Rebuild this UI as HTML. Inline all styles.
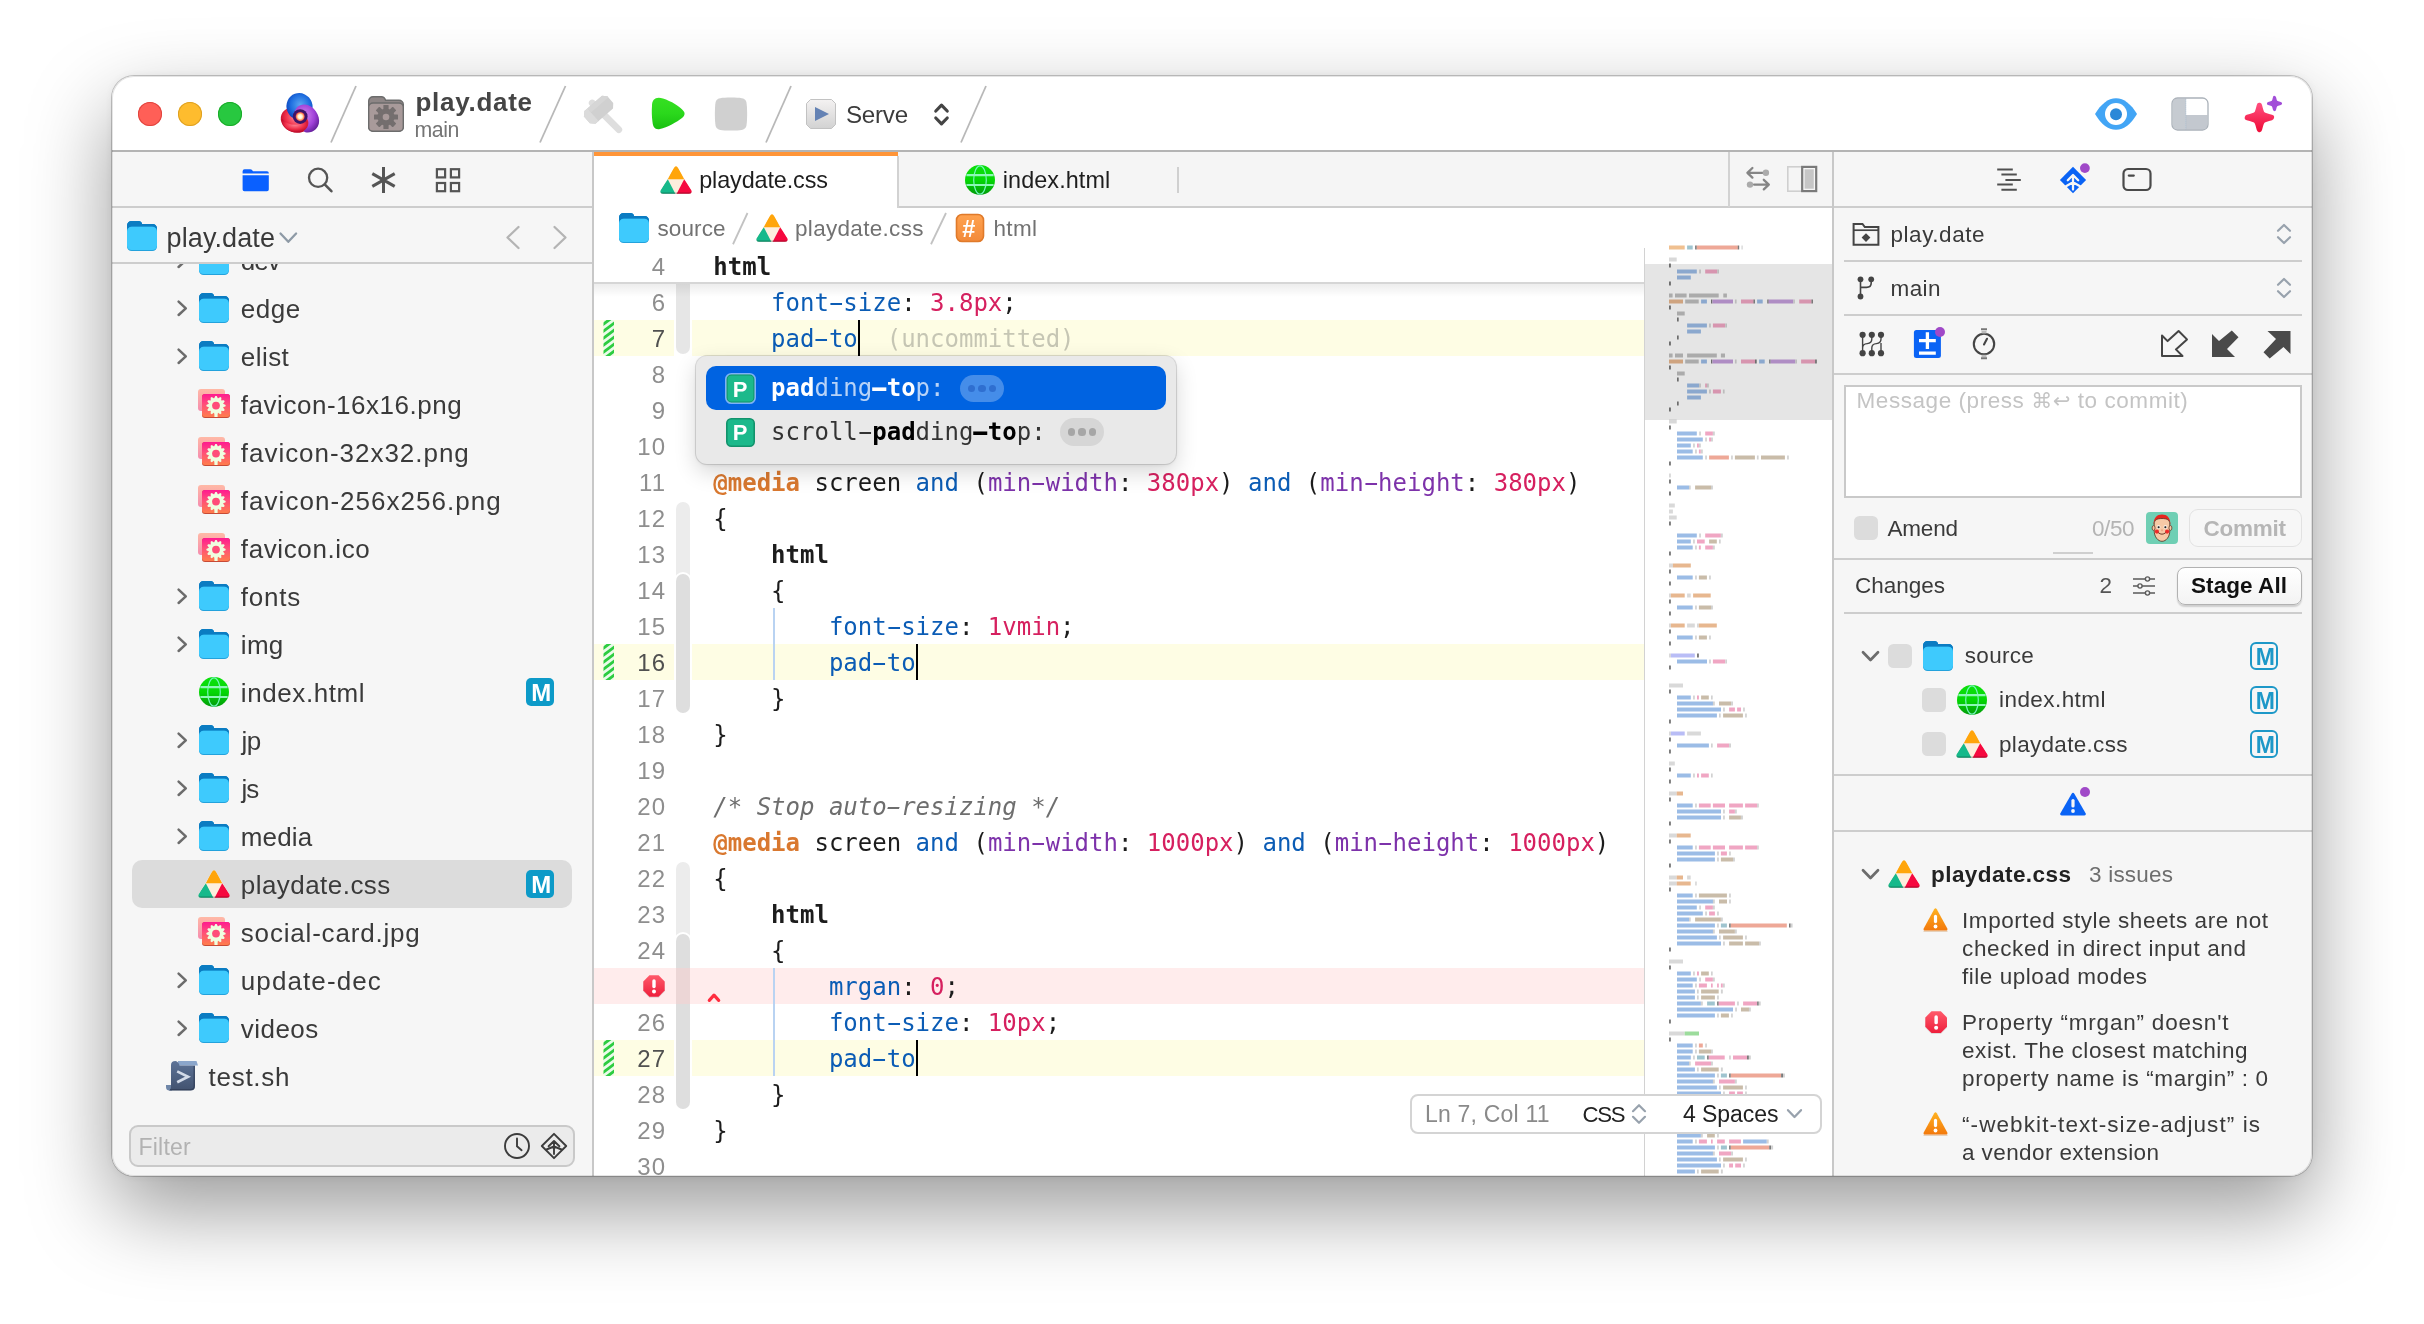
<!DOCTYPE html><html lang="en"><head><meta charset="utf-8"><title>playdate.css — play.date</title><style>
html,body{margin:0;padding:0;background:#fff;}
body{width:2424px;height:1324px;position:relative;overflow:hidden;font-family:"Liberation Sans",sans-serif;}
div,svg{position:absolute;}
svg{overflow:visible;display:block;}
.t{white-space:pre;font-kerning:normal;font-weight:400;}
.hy{display:inline-block;transform:scaleX(1.9);}
.s{font-family:"Liberation Sans","DejaVu Sans",sans-serif;}
.dj{font-family:"DejaVu Sans",sans-serif;font-size:21px;}
.m{font-family:"DejaVu Sans Mono","Liberation Mono",monospace;}
#win{border-radius:22px;background:#f6f6f6;box-shadow:0 0 0 1px rgba(0,0,0,.20),0 34px 84px 0 rgba(0,0,0,.40),0 0 8px rgba(0,0,0,.06);}
#clip{border-radius:22px;overflow:hidden;}
#page{will-change:transform;}
#ring{border-radius:22px;box-shadow:inset 0 0 0 1px rgba(0,0,0,.10);pointer-events:none;}
</style></head><body><div id="win" style="left:112px;top:76px;width:2200px;height:1100px;"></div><div id="clip" style="left:112px;top:76px;width:2200px;height:1100px;"><div id="page" style="left:-112px;top:-76px;width:2424px;height:1324px;"><div style="left:112px;top:76px;width:2200px;height:75px;background:#fff;"></div><div style="left:112px;top:150px;width:2200px;height:2px;background:#b4b4b4;"></div><div style="left:138px;top:102px;width:24px;height:24px;border-radius:50%;background:#ff5f57;box-shadow:inset 0 0 0 1px #e0443e;"></div><div style="left:178px;top:102px;width:24px;height:24px;border-radius:50%;background:#febc2e;box-shadow:inset 0 0 0 1px #dea123;"></div><div style="left:218px;top:102px;width:24px;height:24px;border-radius:50%;background:#28c840;box-shadow:inset 0 0 0 1px #1aab29;"></div><svg style="left:280px;top:93px;" width="40" height="40" viewBox="0 0 40 40"><defs><radialGradient id="g1" cx=".55" cy=".45" r=".6"><stop offset="0" stop-color="#5aa6f2"/><stop offset=".6" stop-color="#1f6fe0"/><stop offset="1" stop-color="#0a3fb8"/></radialGradient><radialGradient id="g2" cx=".5" cy=".4" r=".65"><stop offset="0" stop-color="#ff8a9a"/><stop offset=".55" stop-color="#f0304a"/><stop offset="1" stop-color="#b00020"/></radialGradient><radialGradient id="g3" cx=".4" cy=".4" r=".7"><stop offset="0" stop-color="#d58af0"/><stop offset=".6" stop-color="#a040d8"/><stop offset="1" stop-color="#5a1a90"/></radialGradient><radialGradient id="g4"><stop offset="0" stop-color="#fff"/><stop offset=".45" stop-color="#fff1d0"/><stop offset=".8" stop-color="#ff8a50"/><stop offset="1" stop-color="#c03060"/></radialGradient></defs><ellipse cx="15.5" cy="27" rx="15" ry="12.5" transform="rotate(20 15.5 27)" fill="url(#g2)"/><ellipse cx="19.5" cy="13.5" rx="13" ry="13.5" transform="rotate(-20 19.5 13.5)" fill="url(#g1)"/><path d="M14 23C14 12 24 9 31 13.5C39 19 42 30 36 36C32 40 26 40.5 23.5 38C30 34 30 26 24 22C20 20 16 21 14 23Z" fill="url(#g3)"/><path d="M2 26C8 33 20 34 27 27C29 31 27 36 22 38.5C14 41 3 38 2 26Z" fill="url(#g2)"/><circle cx="20.2" cy="23.6" r="7.4" fill="#3c1468"/><circle cx="20.2" cy="23.6" r="4.6" fill="url(#g4)"/></svg><svg style="left:329px;top:83.5px;" width="29" height="60.5" viewBox="0 0 29 60.5"><path d="M27 2L2 58.5" stroke="#b8b8b8" stroke-width="1.8" fill="none"/></svg><svg style="left:368px;top:96px;" width="36" height="36" viewBox="0 0 36 36"><path d="M.7 5A4.3 4.3 0 0 1 5 .7H13.5C16 .7 16.8 2 17.6 4.3H31A4.3 4.3 0 0 1 35.3 8.6V31A4.3 4.3 0 0 1 31 35.3H5A4.3 4.3 0 0 1 .7 31Z" fill="#8e8686" stroke="#6c6c6c" stroke-width="1.4"/><rect x=".7" y="7" width="34.6" height="28.3" rx="4.3" fill="#a89a9a" stroke="#6c6c6c" stroke-width="1.4"/><g transform="translate(18 21)" fill="#746e6e"><rect x="-2.6" y="-12" width="5.2" height="6" rx=".6" transform="rotate(0)"/><rect x="-2.6" y="-12" width="5.2" height="6" rx=".6" transform="rotate(45)"/><rect x="-2.6" y="-12" width="5.2" height="6" rx=".6" transform="rotate(90)"/><rect x="-2.6" y="-12" width="5.2" height="6" rx=".6" transform="rotate(135)"/><rect x="-2.6" y="-12" width="5.2" height="6" rx=".6" transform="rotate(180)"/><rect x="-2.6" y="-12" width="5.2" height="6" rx=".6" transform="rotate(225)"/><rect x="-2.6" y="-12" width="5.2" height="6" rx=".6" transform="rotate(270)"/><rect x="-2.6" y="-12" width="5.2" height="6" rx=".6" transform="rotate(315)"/><circle r="8.6"/></g><circle cx="18" cy="21" r="3.3" fill="#a89a9a"/></svg><div class="t s" style="left:415.5px;top:87px;font-weight:700;font-size:26px;line-height:30px;color:#454545;letter-spacing:0.714px;">play.date</div><div class="t s" style="left:414.5px;top:117.6px;font-size:21.3px;line-height:24px;color:#757575;letter-spacing:-0.459px;">main</div><svg style="left:538px;top:83.5px;" width="29.5" height="60.5" viewBox="0 0 29.5 60.5"><path d="M27.5 2L2 58.5" stroke="#b8b8b8" stroke-width="1.8" fill="none"/></svg><svg style="left:583px;top:94px;" width="41" height="41" viewBox="0 0 41 41"><path d="M9.2 9L35.8 35.6" stroke="#dedede" stroke-width="6.8" stroke-linecap="round" fill="none"/><g transform="translate(15.6 15.8) rotate(-41)"><path d="M-15.5 -4.5L-11.5 -8.4H11.8L15.5 -4.5V4.5L11.8 8.4H-11.5L-15.5 4.5Z" fill="#d0d0d0"/><path d="M-15.5 -4.5L-11.5 -8.4H-7.5V8.4H-11.5L-15.5 4.5Z" fill="#dbdbdb"/><path d="M-7.5 -8.4H11.8L15.5 -4.5V-3H-7.5Z" fill="#d6d6d6"/></g></svg><svg style="left:651px;top:97px;" width="34" height="34" viewBox="0 0 34 34"><defs><linearGradient id="g5" x1="0" y1="0" x2="0" y2="1"><stop offset="0" stop-color="#36e022"/><stop offset=".5" stop-color="#2bd81c"/><stop offset="1" stop-color="#18c010"/></linearGradient></defs><path d="M1 9C1 2 5 -.5 12 1.5C20 4 29 9.5 32.5 14C34.5 16.5 33.5 19 31 21C26 25 16 30.5 9 32C4 33 2 30 1.5 25C.8 19 .6 14 1 9Z" fill="url(#g5)"/></svg><svg style="left:714px;top:97px;" width="34" height="34" viewBox="0 0 34 34"><path d="M17 .5C27 .5 30.5 1 32 4C33.5 7 33.5 27 32 30C30.5 33 27 33.5 17 33.5C7 33.5 3.5 33 2 30C.5 27 .5 7 2 4C3.5 1 7 .5 17 .5Z" fill="#d0d0d0"/></svg><svg style="left:764px;top:83.5px;" width="29" height="60.5" viewBox="0 0 29 60.5"><path d="M27 2L2 58.5" stroke="#b8b8b8" stroke-width="1.8" fill="none"/></svg><svg style="left:806px;top:99px;" width="30" height="30" viewBox="0 0 30 30"><defs><linearGradient id="g6" x1="0" y1="0" x2="0" y2="1"><stop offset="0" stop-color="#f4f2f2"/><stop offset="1" stop-color="#d2d2d2"/></linearGradient></defs><path d="M4.5 .5H25.5L29.5 4.5V25.5L25.5 29.5H4.5L.5 25.5V4.5Z" fill="url(#g6)" stroke="#c2c2c2" stroke-width="1"/><path d="M9 8L23 15L9 22Z" fill="#6482b4"/></svg><div class="t s" style="left:845.9px;top:100.7px;font-size:24.2px;line-height:27px;color:#3c3c3c;letter-spacing:-0.228px;">Serve</div><svg style="left:934px;top:103px;" width="15" height="23" viewBox="0 0 15 23"><path d="M1.8 8L7.5 2.2L13.2 8M1.8 15L7.5 20.8L13.2 15" fill="none" stroke="#444" stroke-width="3.2" stroke-linecap="round" stroke-linejoin="round"/></svg><svg style="left:958.5px;top:83.5px;" width="29" height="60.5" viewBox="0 0 29 60.5"><path d="M27 2L2 58.5" stroke="#b8b8b8" stroke-width="1.8" fill="none"/></svg><svg style="left:2094px;top:97px;" width="44" height="34" viewBox="0 0 44 34"><path d="M1 17C7 7 14 1.2 22 1.2S37 7 43 17C37 27 30 32.8 22 32.8S7 27 1 17Z" fill="#42a5f5"/><circle cx="22" cy="17" r="11" fill="#fff"/><circle cx="22" cy="17.2" r="6" fill="#2b88d8"/></svg><svg style="left:2171px;top:97px;" width="38" height="34" viewBox="0 0 38 34"><rect x="1" y="1" width="36" height="32" rx="5.5" fill="#fff"/><path d="M6.5 1.6H14.8V32.4H6.5A4.9 4.9 0 0 1 1.6 27.5V6.5A4.9 4.9 0 0 1 6.5 1.6Z" fill="#c6cbd1"/><path d="M14.8 18H36.4V27.5A4.9 4.9 0 0 1 31.5 32.4H14.8Z" fill="#c3c8cf"/><path d="M14.8 1.6V32.4" stroke="#9fb4c8" stroke-width="1" stroke-dasharray="1 1"/><rect x="1" y="1" width="36" height="32" rx="5.5" fill="none" stroke="#aab1b9" stroke-width="1.3"/></svg><svg style="left:2243px;top:94px;" width="42" height="40" viewBox="0 0 42 40"><defs><linearGradient id="g7" x1="0" y1="0" x2="0" y2="1"><stop offset="0" stop-color="#ff4a7a"/><stop offset="1" stop-color="#f0103c"/></linearGradient></defs><path d="M16.4 11.5C18.7 21.2 18.7 21.2 28.4 23.5C18.7 25.8 18.7 25.8 16.4 35.5C14.099999999999998 25.8 14.099999999999998 25.8 4.399999999999999 23.5C14.099999999999998 21.2 14.099999999999998 21.2 16.4 11.5Z" fill="url(#g7)" stroke="url(#g7)" stroke-width="5.4" stroke-linejoin="round"/><path d="M31.5 3.5C32.6 8.4 32.6 8.4 37.5 9.5C32.6 10.6 32.6 10.6 31.5 15.5C30.4 10.6 30.4 10.6 25.5 9.5C30.4 8.4 30.4 8.4 31.5 3.5Z" fill="#a24ed8" stroke="#a24ed8" stroke-width="3.2" stroke-linejoin="round"/></svg><div style="left:112px;top:152px;width:480px;height:1024px;background:#f6f6f6;"></div><div style="left:592px;top:152px;width:2px;height:1024px;background:#c8c8c8;"></div><svg style="left:242px;top:168px;" width="28" height="24" viewBox="0 0 28 24"><path d="M.6 3.2A2 2 0 0 1 2.6 1.2H8.2C9.6 1.2 10.2 2 11 3.2H25A1.8 1.8 0 0 1 26.8 5V5.6H.6ZM.6 7.2H26.8V21.4A1.8 1.8 0 0 1 25 23.2H2.4A1.8 1.8 0 0 1 .6 21.4Z" fill="#0a60ff"/></svg><svg style="left:305px;top:165px;" width="30" height="30" viewBox="0 0 30 30"><circle cx="13.1" cy="12.8" r="9.1" fill="none" stroke="#555" stroke-width="2.3"/><path d="M19.7 19.4L26.4 26.2" stroke="#555" stroke-width="2.6" stroke-linecap="round"/></svg><svg style="left:369px;top:165px;" width="30" height="30" viewBox="0 0 30 30"><path d="M14.5 2.1V27.9M3.3 8.6L25.7 21.4M25.7 8.6L3.3 21.4" stroke="#555" stroke-width="3" fill="none"/></svg><svg style="left:434px;top:166px;" width="28" height="28" viewBox="0 0 28 28"><g fill="none" stroke="#555" stroke-width="2.2"><rect x="2.9" y="3.2" width="8.2" height="8.2"/><rect x="16.9" y="3.2" width="8.2" height="8.2"/><rect x="2.9" y="17" width="8.2" height="8.2"/><rect x="16.9" y="17" width="8.2" height="8.2"/></g></svg><div style="left:112px;top:206px;width:480px;height:2px;background:#cdcdcd;"></div><svg style="left:127px;top:221px;" width="30" height="30" viewBox="0 0 30 30"><path d="M0 4.5A4.5 4.5 0 0 1 4.5 0H11.5C13.6 0 14.4 .9 15.1 2.9H25.7A4.3 4.3 0 0 1 30 7.2V20H0Z" fill="#0a86cf"/><path d="M0 4.5A4.5 4.5 0 0 1 4.5 0H11.5C13.6 0 14.4 .9 15.1 2.9H25.7A4.3 4.3 0 0 1 30 7.2V9H0Z" fill="#0b7cc2"/><rect x="0" y="5.8" width="30" height="24.2" rx="4.6" fill="#23a2dc"/><rect x="0" y="5.8" width="30" height="23.2" rx="4.6" fill="#3ecafd"/></svg><div class="t s" style="left:166.6px;top:222.5px;font-size:27px;line-height:30px;color:#3a3a3a;letter-spacing:0.091px;">play.date</div><svg style="left:279px;top:232px;" width="19" height="12" viewBox="0 0 19 12"><path d="M1.5 1.5L9.3 9.8L17.1 1.5" fill="none" stroke="#8e9aa6" stroke-width="2.3" stroke-linecap="round" stroke-linejoin="round"/></svg><svg style="left:505px;top:225px;" width="16" height="26" viewBox="0 0 16 26"><path d="M13.5 2L2.5 12.5L13.5 23" fill="none" stroke="#b4b4b4" stroke-width="2.3" stroke-linecap="round" stroke-linejoin="round"/></svg><svg style="left:552px;top:225px;" width="16" height="26" viewBox="0 0 16 26"><path d="M2.5 2L13.5 12.5L2.5 23" fill="none" stroke="#b4b4b4" stroke-width="2.3" stroke-linecap="round" stroke-linejoin="round"/></svg><div style="left:112px;top:262px;width:480px;height:2px;background:#cdcdcd;"></div><div style="left:112px;top:264px;width:481px;height:860px;overflow:hidden;"><div style="left:-112px;top:-264px;width:2424px;height:1324px;"><svg style="left:177px;top:252px;" width="11" height="17" viewBox="0 0 11 17"><path d="M1.6 1.6L8.8 8.3L1.6 15" fill="none" stroke="#6c6c6c" stroke-width="2.5" stroke-linecap="round" stroke-linejoin="round"/></svg><svg style="left:199px;top:245px;" width="30" height="30" viewBox="0 0 30 30"><path d="M0 4.5A4.5 4.5 0 0 1 4.5 0H11.5C13.6 0 14.4 .9 15.1 2.9H25.7A4.3 4.3 0 0 1 30 7.2V20H0Z" fill="#0a86cf"/><path d="M0 4.5A4.5 4.5 0 0 1 4.5 0H11.5C13.6 0 14.4 .9 15.1 2.9H25.7A4.3 4.3 0 0 1 30 7.2V9H0Z" fill="#0b7cc2"/><rect x="0" y="5.8" width="30" height="24.2" rx="4.6" fill="#23a2dc"/><rect x="0" y="5.8" width="30" height="23.2" rx="4.6" fill="#3ecafd"/></svg><div class="t s" style="left:240.8px;top:245.7px;font-size:26px;line-height:30px;color:#3a3a3a;letter-spacing:-0.956px;">dev</div><svg style="left:177px;top:300px;" width="11" height="17" viewBox="0 0 11 17"><path d="M1.6 1.6L8.8 8.3L1.6 15" fill="none" stroke="#6c6c6c" stroke-width="2.5" stroke-linecap="round" stroke-linejoin="round"/></svg><svg style="left:199px;top:293px;" width="30" height="30" viewBox="0 0 30 30"><path d="M0 4.5A4.5 4.5 0 0 1 4.5 0H11.5C13.6 0 14.4 .9 15.1 2.9H25.7A4.3 4.3 0 0 1 30 7.2V20H0Z" fill="#0a86cf"/><path d="M0 4.5A4.5 4.5 0 0 1 4.5 0H11.5C13.6 0 14.4 .9 15.1 2.9H25.7A4.3 4.3 0 0 1 30 7.2V9H0Z" fill="#0b7cc2"/><rect x="0" y="5.8" width="30" height="24.2" rx="4.6" fill="#23a2dc"/><rect x="0" y="5.8" width="30" height="23.2" rx="4.6" fill="#3ecafd"/></svg><div class="t s" style="left:240.8px;top:293.7px;font-size:26px;line-height:30px;color:#3a3a3a;letter-spacing:0.55px;">edge</div><svg style="left:177px;top:348px;" width="11" height="17" viewBox="0 0 11 17"><path d="M1.6 1.6L8.8 8.3L1.6 15" fill="none" stroke="#6c6c6c" stroke-width="2.5" stroke-linecap="round" stroke-linejoin="round"/></svg><svg style="left:199px;top:341px;" width="30" height="30" viewBox="0 0 30 30"><path d="M0 4.5A4.5 4.5 0 0 1 4.5 0H11.5C13.6 0 14.4 .9 15.1 2.9H25.7A4.3 4.3 0 0 1 30 7.2V20H0Z" fill="#0a86cf"/><path d="M0 4.5A4.5 4.5 0 0 1 4.5 0H11.5C13.6 0 14.4 .9 15.1 2.9H25.7A4.3 4.3 0 0 1 30 7.2V9H0Z" fill="#0b7cc2"/><rect x="0" y="5.8" width="30" height="24.2" rx="4.6" fill="#23a2dc"/><rect x="0" y="5.8" width="30" height="23.2" rx="4.6" fill="#3ecafd"/></svg><div class="t s" style="left:240.8px;top:341.7px;font-size:26px;line-height:30px;color:#3a3a3a;letter-spacing:0.443px;">elist</div><svg style="left:198px;top:388.5px;" width="32" height="29" viewBox="0 0 32 29"><defs><linearGradient id="g8" x1="0" y1="0" x2="0" y2="1"><stop offset="0" stop-color="#ff1a90"/><stop offset=".45" stop-color="#ff4f79"/><stop offset="1" stop-color="#ff7d4c"/></linearGradient><linearGradient id="g9" x1="0" y1="0" x2="0" y2="1"><stop offset="0" stop-color="#ffb9a6"/><stop offset="1" stop-color="#f58cae"/></linearGradient></defs><rect x="0" y="0" width="27" height="22" rx="3" fill="url(#g9)"/><rect x="4" y="5" width="28" height="24" rx="3" fill="#c74a36"/><rect x="4" y="5" width="28" height="23" rx="3" fill="url(#g8)"/><g transform="translate(18 16.6)" fill="#efffe0"><path d="M-2.5 -5.8L-.7 -9.6H.7L2.5 -5.8Z" transform="rotate(0)"/><path d="M-2.5 -5.8L-.7 -9.6H.7L2.5 -5.8Z" transform="rotate(30)"/><path d="M-2.5 -5.8L-.7 -9.6H.7L2.5 -5.8Z" transform="rotate(60)"/><path d="M-2.5 -5.8L-.7 -9.6H.7L2.5 -5.8Z" transform="rotate(90)"/><path d="M-2.5 -5.8L-.7 -9.6H.7L2.5 -5.8Z" transform="rotate(120)"/><path d="M-2.5 -5.8L-.7 -9.6H.7L2.5 -5.8Z" transform="rotate(150)"/><path d="M-2.5 -5.8L-.7 -9.6H.7L2.5 -5.8Z" transform="rotate(180)"/><path d="M-2.5 -5.8L-.7 -9.6H.7L2.5 -5.8Z" transform="rotate(210)"/><path d="M-2.5 -5.8L-.7 -9.6H.7L2.5 -5.8Z" transform="rotate(240)"/><path d="M-2.5 -5.8L-.7 -9.6H.7L2.5 -5.8Z" transform="rotate(270)"/><path d="M-2.5 -5.8L-.7 -9.6H.7L2.5 -5.8Z" transform="rotate(300)"/><path d="M-2.5 -5.8L-.7 -9.6H.7L2.5 -5.8Z" transform="rotate(330)"/><circle r="6.5"/><rect x="-1.6" y="5" width="3.2" height="6.4"/></g><circle cx="18" cy="16.6" r="3.9" fill="#ff4d78"/></svg><div class="t s" style="left:240.8px;top:389.7px;font-size:26px;line-height:30px;color:#3a3a3a;letter-spacing:0.533px;">favicon-16x16.png</div><svg style="left:198px;top:436.5px;" width="32" height="29" viewBox="0 0 32 29"><defs><linearGradient id="g10" x1="0" y1="0" x2="0" y2="1"><stop offset="0" stop-color="#ff1a90"/><stop offset=".45" stop-color="#ff4f79"/><stop offset="1" stop-color="#ff7d4c"/></linearGradient><linearGradient id="g11" x1="0" y1="0" x2="0" y2="1"><stop offset="0" stop-color="#ffb9a6"/><stop offset="1" stop-color="#f58cae"/></linearGradient></defs><rect x="0" y="0" width="27" height="22" rx="3" fill="url(#g11)"/><rect x="4" y="5" width="28" height="24" rx="3" fill="#c74a36"/><rect x="4" y="5" width="28" height="23" rx="3" fill="url(#g10)"/><g transform="translate(18 16.6)" fill="#efffe0"><path d="M-2.5 -5.8L-.7 -9.6H.7L2.5 -5.8Z" transform="rotate(0)"/><path d="M-2.5 -5.8L-.7 -9.6H.7L2.5 -5.8Z" transform="rotate(30)"/><path d="M-2.5 -5.8L-.7 -9.6H.7L2.5 -5.8Z" transform="rotate(60)"/><path d="M-2.5 -5.8L-.7 -9.6H.7L2.5 -5.8Z" transform="rotate(90)"/><path d="M-2.5 -5.8L-.7 -9.6H.7L2.5 -5.8Z" transform="rotate(120)"/><path d="M-2.5 -5.8L-.7 -9.6H.7L2.5 -5.8Z" transform="rotate(150)"/><path d="M-2.5 -5.8L-.7 -9.6H.7L2.5 -5.8Z" transform="rotate(180)"/><path d="M-2.5 -5.8L-.7 -9.6H.7L2.5 -5.8Z" transform="rotate(210)"/><path d="M-2.5 -5.8L-.7 -9.6H.7L2.5 -5.8Z" transform="rotate(240)"/><path d="M-2.5 -5.8L-.7 -9.6H.7L2.5 -5.8Z" transform="rotate(270)"/><path d="M-2.5 -5.8L-.7 -9.6H.7L2.5 -5.8Z" transform="rotate(300)"/><path d="M-2.5 -5.8L-.7 -9.6H.7L2.5 -5.8Z" transform="rotate(330)"/><circle r="6.5"/><rect x="-1.6" y="5" width="3.2" height="6.4"/></g><circle cx="18" cy="16.6" r="3.9" fill="#ff4d78"/></svg><div class="t s" style="left:240.8px;top:437.7px;font-size:26px;line-height:30px;color:#3a3a3a;letter-spacing:0.971px;">favicon-32x32.png</div><svg style="left:198px;top:484.5px;" width="32" height="29" viewBox="0 0 32 29"><defs><linearGradient id="g12" x1="0" y1="0" x2="0" y2="1"><stop offset="0" stop-color="#ff1a90"/><stop offset=".45" stop-color="#ff4f79"/><stop offset="1" stop-color="#ff7d4c"/></linearGradient><linearGradient id="g13" x1="0" y1="0" x2="0" y2="1"><stop offset="0" stop-color="#ffb9a6"/><stop offset="1" stop-color="#f58cae"/></linearGradient></defs><rect x="0" y="0" width="27" height="22" rx="3" fill="url(#g13)"/><rect x="4" y="5" width="28" height="24" rx="3" fill="#c74a36"/><rect x="4" y="5" width="28" height="23" rx="3" fill="url(#g12)"/><g transform="translate(18 16.6)" fill="#efffe0"><path d="M-2.5 -5.8L-.7 -9.6H.7L2.5 -5.8Z" transform="rotate(0)"/><path d="M-2.5 -5.8L-.7 -9.6H.7L2.5 -5.8Z" transform="rotate(30)"/><path d="M-2.5 -5.8L-.7 -9.6H.7L2.5 -5.8Z" transform="rotate(60)"/><path d="M-2.5 -5.8L-.7 -9.6H.7L2.5 -5.8Z" transform="rotate(90)"/><path d="M-2.5 -5.8L-.7 -9.6H.7L2.5 -5.8Z" transform="rotate(120)"/><path d="M-2.5 -5.8L-.7 -9.6H.7L2.5 -5.8Z" transform="rotate(150)"/><path d="M-2.5 -5.8L-.7 -9.6H.7L2.5 -5.8Z" transform="rotate(180)"/><path d="M-2.5 -5.8L-.7 -9.6H.7L2.5 -5.8Z" transform="rotate(210)"/><path d="M-2.5 -5.8L-.7 -9.6H.7L2.5 -5.8Z" transform="rotate(240)"/><path d="M-2.5 -5.8L-.7 -9.6H.7L2.5 -5.8Z" transform="rotate(270)"/><path d="M-2.5 -5.8L-.7 -9.6H.7L2.5 -5.8Z" transform="rotate(300)"/><path d="M-2.5 -5.8L-.7 -9.6H.7L2.5 -5.8Z" transform="rotate(330)"/><circle r="6.5"/><rect x="-1.6" y="5" width="3.2" height="6.4"/></g><circle cx="18" cy="16.6" r="3.9" fill="#ff4d78"/></svg><div class="t s" style="left:240.8px;top:485.7px;font-size:26px;line-height:30px;color:#3a3a3a;letter-spacing:1.033px;">favicon-256x256.png</div><svg style="left:198px;top:532.5px;" width="32" height="29" viewBox="0 0 32 29"><defs><linearGradient id="g14" x1="0" y1="0" x2="0" y2="1"><stop offset="0" stop-color="#ff1a90"/><stop offset=".45" stop-color="#ff4f79"/><stop offset="1" stop-color="#ff7d4c"/></linearGradient><linearGradient id="g15" x1="0" y1="0" x2="0" y2="1"><stop offset="0" stop-color="#ffb9a6"/><stop offset="1" stop-color="#f58cae"/></linearGradient></defs><rect x="0" y="0" width="27" height="22" rx="3" fill="url(#g15)"/><rect x="4" y="5" width="28" height="24" rx="3" fill="#c74a36"/><rect x="4" y="5" width="28" height="23" rx="3" fill="url(#g14)"/><g transform="translate(18 16.6)" fill="#efffe0"><path d="M-2.5 -5.8L-.7 -9.6H.7L2.5 -5.8Z" transform="rotate(0)"/><path d="M-2.5 -5.8L-.7 -9.6H.7L2.5 -5.8Z" transform="rotate(30)"/><path d="M-2.5 -5.8L-.7 -9.6H.7L2.5 -5.8Z" transform="rotate(60)"/><path d="M-2.5 -5.8L-.7 -9.6H.7L2.5 -5.8Z" transform="rotate(90)"/><path d="M-2.5 -5.8L-.7 -9.6H.7L2.5 -5.8Z" transform="rotate(120)"/><path d="M-2.5 -5.8L-.7 -9.6H.7L2.5 -5.8Z" transform="rotate(150)"/><path d="M-2.5 -5.8L-.7 -9.6H.7L2.5 -5.8Z" transform="rotate(180)"/><path d="M-2.5 -5.8L-.7 -9.6H.7L2.5 -5.8Z" transform="rotate(210)"/><path d="M-2.5 -5.8L-.7 -9.6H.7L2.5 -5.8Z" transform="rotate(240)"/><path d="M-2.5 -5.8L-.7 -9.6H.7L2.5 -5.8Z" transform="rotate(270)"/><path d="M-2.5 -5.8L-.7 -9.6H.7L2.5 -5.8Z" transform="rotate(300)"/><path d="M-2.5 -5.8L-.7 -9.6H.7L2.5 -5.8Z" transform="rotate(330)"/><circle r="6.5"/><rect x="-1.6" y="5" width="3.2" height="6.4"/></g><circle cx="18" cy="16.6" r="3.9" fill="#ff4d78"/></svg><div class="t s" style="left:240.8px;top:533.7px;font-size:26px;line-height:30px;color:#3a3a3a;letter-spacing:0.615px;">favicon.ico</div><svg style="left:177px;top:588px;" width="11" height="17" viewBox="0 0 11 17"><path d="M1.6 1.6L8.8 8.3L1.6 15" fill="none" stroke="#6c6c6c" stroke-width="2.5" stroke-linecap="round" stroke-linejoin="round"/></svg><svg style="left:199px;top:581px;" width="30" height="30" viewBox="0 0 30 30"><path d="M0 4.5A4.5 4.5 0 0 1 4.5 0H11.5C13.6 0 14.4 .9 15.1 2.9H25.7A4.3 4.3 0 0 1 30 7.2V20H0Z" fill="#0a86cf"/><path d="M0 4.5A4.5 4.5 0 0 1 4.5 0H11.5C13.6 0 14.4 .9 15.1 2.9H25.7A4.3 4.3 0 0 1 30 7.2V9H0Z" fill="#0b7cc2"/><rect x="0" y="5.8" width="30" height="24.2" rx="4.6" fill="#23a2dc"/><rect x="0" y="5.8" width="30" height="23.2" rx="4.6" fill="#3ecafd"/></svg><div class="t s" style="left:240.8px;top:581.7px;font-size:26px;line-height:30px;color:#3a3a3a;letter-spacing:0.783px;">fonts</div><svg style="left:177px;top:636px;" width="11" height="17" viewBox="0 0 11 17"><path d="M1.6 1.6L8.8 8.3L1.6 15" fill="none" stroke="#6c6c6c" stroke-width="2.5" stroke-linecap="round" stroke-linejoin="round"/></svg><svg style="left:199px;top:629px;" width="30" height="30" viewBox="0 0 30 30"><path d="M0 4.5A4.5 4.5 0 0 1 4.5 0H11.5C13.6 0 14.4 .9 15.1 2.9H25.7A4.3 4.3 0 0 1 30 7.2V20H0Z" fill="#0a86cf"/><path d="M0 4.5A4.5 4.5 0 0 1 4.5 0H11.5C13.6 0 14.4 .9 15.1 2.9H25.7A4.3 4.3 0 0 1 30 7.2V9H0Z" fill="#0b7cc2"/><rect x="0" y="5.8" width="30" height="24.2" rx="4.6" fill="#23a2dc"/><rect x="0" y="5.8" width="30" height="23.2" rx="4.6" fill="#3ecafd"/></svg><div class="t s" style="left:240.8px;top:629.7px;font-size:26px;line-height:30px;color:#3a3a3a;letter-spacing:0.307px;">img</div><svg style="left:199px;top:677px;" width="30" height="30" viewBox="0 0 30 30"><defs><linearGradient id="g16" x1="0" y1="0" x2="0" y2="1"><stop offset="0" stop-color="#0de00d"/><stop offset=".5" stop-color="#04d804"/><stop offset="1" stop-color="#029a0a"/></linearGradient></defs><circle cx="15" cy="15" r="15" fill="url(#g16)"/><ellipse cx="15" cy="15" rx="6.3" ry="14.2" fill="none" stroke="#74f5bf" stroke-width="1.2"/><path d="M1.4 10.2H28.6M1.4 20H28.6" stroke="#8cf7b6" stroke-width="2.2" fill="none"/></svg><div class="t s" style="left:240.8px;top:677.7px;font-size:26px;line-height:30px;color:#3a3a3a;letter-spacing:0.588px;">index.html</div><div style="left:526px;top:678px;width:28px;height:28px;background:#0d9ac8;border-radius:5px;"></div><div class="t s" style="left:531.2px;top:679.2px;font-weight:700;font-size:24px;line-height:27px;color:#fff;">M</div><svg style="left:177px;top:732px;" width="11" height="17" viewBox="0 0 11 17"><path d="M1.6 1.6L8.8 8.3L1.6 15" fill="none" stroke="#6c6c6c" stroke-width="2.5" stroke-linecap="round" stroke-linejoin="round"/></svg><svg style="left:199px;top:725px;" width="30" height="30" viewBox="0 0 30 30"><path d="M0 4.5A4.5 4.5 0 0 1 4.5 0H11.5C13.6 0 14.4 .9 15.1 2.9H25.7A4.3 4.3 0 0 1 30 7.2V20H0Z" fill="#0a86cf"/><path d="M0 4.5A4.5 4.5 0 0 1 4.5 0H11.5C13.6 0 14.4 .9 15.1 2.9H25.7A4.3 4.3 0 0 1 30 7.2V9H0Z" fill="#0b7cc2"/><rect x="0" y="5.8" width="30" height="24.2" rx="4.6" fill="#23a2dc"/><rect x="0" y="5.8" width="30" height="23.2" rx="4.6" fill="#3ecafd"/></svg><div class="t s" style="left:241.45px;top:725.7px;font-size:26px;line-height:30px;color:#3a3a3a;letter-spacing:-0.378px;">jp</div><svg style="left:177px;top:780px;" width="11" height="17" viewBox="0 0 11 17"><path d="M1.6 1.6L8.8 8.3L1.6 15" fill="none" stroke="#6c6c6c" stroke-width="2.5" stroke-linecap="round" stroke-linejoin="round"/></svg><svg style="left:199px;top:773px;" width="30" height="30" viewBox="0 0 30 30"><path d="M0 4.5A4.5 4.5 0 0 1 4.5 0H11.5C13.6 0 14.4 .9 15.1 2.9H25.7A4.3 4.3 0 0 1 30 7.2V20H0Z" fill="#0a86cf"/><path d="M0 4.5A4.5 4.5 0 0 1 4.5 0H11.5C13.6 0 14.4 .9 15.1 2.9H25.7A4.3 4.3 0 0 1 30 7.2V9H0Z" fill="#0b7cc2"/><rect x="0" y="5.8" width="30" height="24.2" rx="4.6" fill="#23a2dc"/><rect x="0" y="5.8" width="30" height="23.2" rx="4.6" fill="#3ecafd"/></svg><div class="t s" style="left:241.45px;top:773.7px;font-size:26px;line-height:30px;color:#3a3a3a;letter-spacing:-0.922px;">js</div><svg style="left:177px;top:828px;" width="11" height="17" viewBox="0 0 11 17"><path d="M1.6 1.6L8.8 8.3L1.6 15" fill="none" stroke="#6c6c6c" stroke-width="2.5" stroke-linecap="round" stroke-linejoin="round"/></svg><svg style="left:199px;top:821px;" width="30" height="30" viewBox="0 0 30 30"><path d="M0 4.5A4.5 4.5 0 0 1 4.5 0H11.5C13.6 0 14.4 .9 15.1 2.9H25.7A4.3 4.3 0 0 1 30 7.2V20H0Z" fill="#0a86cf"/><path d="M0 4.5A4.5 4.5 0 0 1 4.5 0H11.5C13.6 0 14.4 .9 15.1 2.9H25.7A4.3 4.3 0 0 1 30 7.2V9H0Z" fill="#0b7cc2"/><rect x="0" y="5.8" width="30" height="24.2" rx="4.6" fill="#23a2dc"/><rect x="0" y="5.8" width="30" height="23.2" rx="4.6" fill="#3ecafd"/></svg><div class="t s" style="left:240.8px;top:821.7px;font-size:26px;line-height:30px;color:#3a3a3a;letter-spacing:0.163px;">media</div><div style="left:132px;top:860px;width:440px;height:48px;background:#dcdcdc;border-radius:10px;"></div><svg style="left:198px;top:870px;" width="32" height="28" viewBox="0 0 32 28"><path d="M13.6 1.6Q16 -1.6 18.4 1.6L31.2 23.6Q32.8 27 29.4 27.4H2.6Q-.8 27 .8 23.6Z" fill="#c8102e" opacity="0"/><clipPath id="csc"><path d="M13.9 1.9Q16 -1.3 18.1 1.9L31.3 24.2Q32.6 27.6 29.2 27.8H2.8Q-.6 27.6 .7 24.2Z"/></clipPath><g clip-path="url(#csc)"><rect x="-2" y="-2" width="36" height="32" fill="#fdeedd"/><path d="M16 -3L24.2 13.3H7.8Z" fill="#ffa50b"/><path d="M7.8 13.3L16 29H-3L-3 29Z" fill="#16b98b"/><path d="M24.2 13.3L35 29H16Z" fill="#f6093f"/><path d="M-2 26.4H34V30H-2Z" fill="#000" opacity=".28"/></g></svg><div class="t s" style="left:240.8px;top:869.7px;font-size:26px;line-height:30px;color:#3a3a3a;letter-spacing:0.451px;">playdate.css</div><div style="left:526px;top:870px;width:28px;height:28px;background:#0d9ac8;border-radius:5px;"></div><div class="t s" style="left:531.2px;top:871.2px;font-weight:700;font-size:24px;line-height:27px;color:#fff;">M</div><svg style="left:198px;top:916.5px;" width="32" height="29" viewBox="0 0 32 29"><defs><linearGradient id="g17" x1="0" y1="0" x2="0" y2="1"><stop offset="0" stop-color="#ff1a90"/><stop offset=".45" stop-color="#ff4f79"/><stop offset="1" stop-color="#ff7d4c"/></linearGradient><linearGradient id="g18" x1="0" y1="0" x2="0" y2="1"><stop offset="0" stop-color="#ffb9a6"/><stop offset="1" stop-color="#f58cae"/></linearGradient></defs><rect x="0" y="0" width="27" height="22" rx="3" fill="url(#g18)"/><rect x="4" y="5" width="28" height="24" rx="3" fill="#c74a36"/><rect x="4" y="5" width="28" height="23" rx="3" fill="url(#g17)"/><g transform="translate(18 16.6)" fill="#efffe0"><path d="M-2.5 -5.8L-.7 -9.6H.7L2.5 -5.8Z" transform="rotate(0)"/><path d="M-2.5 -5.8L-.7 -9.6H.7L2.5 -5.8Z" transform="rotate(30)"/><path d="M-2.5 -5.8L-.7 -9.6H.7L2.5 -5.8Z" transform="rotate(60)"/><path d="M-2.5 -5.8L-.7 -9.6H.7L2.5 -5.8Z" transform="rotate(90)"/><path d="M-2.5 -5.8L-.7 -9.6H.7L2.5 -5.8Z" transform="rotate(120)"/><path d="M-2.5 -5.8L-.7 -9.6H.7L2.5 -5.8Z" transform="rotate(150)"/><path d="M-2.5 -5.8L-.7 -9.6H.7L2.5 -5.8Z" transform="rotate(180)"/><path d="M-2.5 -5.8L-.7 -9.6H.7L2.5 -5.8Z" transform="rotate(210)"/><path d="M-2.5 -5.8L-.7 -9.6H.7L2.5 -5.8Z" transform="rotate(240)"/><path d="M-2.5 -5.8L-.7 -9.6H.7L2.5 -5.8Z" transform="rotate(270)"/><path d="M-2.5 -5.8L-.7 -9.6H.7L2.5 -5.8Z" transform="rotate(300)"/><path d="M-2.5 -5.8L-.7 -9.6H.7L2.5 -5.8Z" transform="rotate(330)"/><circle r="6.5"/><rect x="-1.6" y="5" width="3.2" height="6.4"/></g><circle cx="18" cy="16.6" r="3.9" fill="#ff4d78"/></svg><div class="t s" style="left:240.8px;top:917.7px;font-size:26px;line-height:30px;color:#3a3a3a;letter-spacing:0.813px;">social-card.jpg</div><svg style="left:177px;top:972px;" width="11" height="17" viewBox="0 0 11 17"><path d="M1.6 1.6L8.8 8.3L1.6 15" fill="none" stroke="#6c6c6c" stroke-width="2.5" stroke-linecap="round" stroke-linejoin="round"/></svg><svg style="left:199px;top:965px;" width="30" height="30" viewBox="0 0 30 30"><path d="M0 4.5A4.5 4.5 0 0 1 4.5 0H11.5C13.6 0 14.4 .9 15.1 2.9H25.7A4.3 4.3 0 0 1 30 7.2V20H0Z" fill="#0a86cf"/><path d="M0 4.5A4.5 4.5 0 0 1 4.5 0H11.5C13.6 0 14.4 .9 15.1 2.9H25.7A4.3 4.3 0 0 1 30 7.2V9H0Z" fill="#0b7cc2"/><rect x="0" y="5.8" width="30" height="24.2" rx="4.6" fill="#23a2dc"/><rect x="0" y="5.8" width="30" height="23.2" rx="4.6" fill="#3ecafd"/></svg><div class="t s" style="left:240.8px;top:965.7px;font-size:26px;line-height:30px;color:#3a3a3a;letter-spacing:1.1px;">update-dec</div><svg style="left:177px;top:1020px;" width="11" height="17" viewBox="0 0 11 17"><path d="M1.6 1.6L8.8 8.3L1.6 15" fill="none" stroke="#6c6c6c" stroke-width="2.5" stroke-linecap="round" stroke-linejoin="round"/></svg><svg style="left:199px;top:1013px;" width="30" height="30" viewBox="0 0 30 30"><path d="M0 4.5A4.5 4.5 0 0 1 4.5 0H11.5C13.6 0 14.4 .9 15.1 2.9H25.7A4.3 4.3 0 0 1 30 7.2V20H0Z" fill="#0a86cf"/><path d="M0 4.5A4.5 4.5 0 0 1 4.5 0H11.5C13.6 0 14.4 .9 15.1 2.9H25.7A4.3 4.3 0 0 1 30 7.2V9H0Z" fill="#0b7cc2"/><rect x="0" y="5.8" width="30" height="24.2" rx="4.6" fill="#23a2dc"/><rect x="0" y="5.8" width="30" height="23.2" rx="4.6" fill="#3ecafd"/></svg><div class="t s" style="left:240.8px;top:1013.7px;font-size:26px;line-height:30px;color:#3a3a3a;letter-spacing:0.467px;">videos</div><svg style="left:166px;top:1061px;" width="32" height="30" viewBox="0 0 32 30"><defs><linearGradient id="g19" x1="0" y1="0" x2="0" y2="1"><stop offset="0" stop-color="#5d7397"/><stop offset="1" stop-color="#42526f"/></linearGradient></defs><path d="M12 0H30.5L32 4.5H12Z" fill="#8ba6cb"/><path d="M0 24H6V29.5H3.5Q0 29.5 0 26Z" fill="#6f86a8"/><path d="M5 4Q5 0 9.5 0Q12.5 .5 13.5 4.5H29V25Q29 29.5 24.5 29.5H2.5Q5 29 5 25.5Z" fill="url(#g19)"/><path d="M28.2 5V25Q28.2 28.7 24.5 28.7H4" fill="none" stroke="#2e3a52" stroke-width="1.3" opacity=".7"/><path d="M11.2 10.4L22 15.8L11.2 21.2" fill="none" stroke="#d3dbe8" stroke-width="2.7"/></svg><div class="t s" style="left:208.5px;top:1062px;font-size:26px;line-height:30px;color:#3a3a3a;letter-spacing:0.734px;">test.sh</div></div></div><div style="left:129px;top:1125px;width:446px;height:41.5px;box-sizing:border-box;border:2px solid #c9c9c9;border-radius:9px;background:#ebebeb;"></div><div class="t s" style="left:138.6px;top:1134px;font-size:23px;line-height:26px;color:#b2b2b2;letter-spacing:0.179px;">Filter</div><svg style="left:503px;top:1132px;" width="28" height="28" viewBox="0 0 28 28"><circle cx="14" cy="14" r="12" fill="none" stroke="#3c3c3c" stroke-width="1.9"/><path d="M14 6.5V14.3L18.6 18.2" fill="none" stroke="#3c3c3c" stroke-width="1.9" stroke-linecap="round"/></svg><svg style="left:540px;top:1132px;" width="28" height="28" viewBox="0 0 28 28"><path d="M14 1.8L26.2 14L14 26.2L1.8 14Z" fill="none" stroke="#3c3c3c" stroke-width="1.9" stroke-linejoin="round"/><path d="M14 22V9.5M8.6 14.3L14 9L19.4 14.3M6.5 17.5L14 14.5L21.5 17.5" fill="none" stroke="#3c3c3c" stroke-width="1.9" stroke-linecap="round" stroke-linejoin="round"/></svg><div style="left:594px;top:152px;width:1238px;height:1024px;background:#fff;"></div><div style="left:594px;top:152px;width:1238px;height:55px;background:#f5f5f5;"></div><div style="left:594px;top:206px;width:1238px;height:2px;background:#cdcdcd;"></div><div style="left:594px;top:152px;width:304px;height:56px;background:#fff;"></div><div style="left:594px;top:152px;width:304px;height:3.6px;background:#ff9538;"></div><div style="left:897px;top:156px;width:2px;height:52px;background:#d2d2d2;"></div><div style="left:1177px;top:167px;width:2px;height:26px;background:#d0d0d0;"></div><div style="left:1728px;top:152px;width:2px;height:55px;background:#d2d2d2;"></div><svg style="left:660px;top:166px;" width="32" height="28" viewBox="0 0 32 28"><path d="M13.6 1.6Q16 -1.6 18.4 1.6L31.2 23.6Q32.8 27 29.4 27.4H2.6Q-.8 27 .8 23.6Z" fill="#c8102e" opacity="0"/><clipPath id="csc"><path d="M13.9 1.9Q16 -1.3 18.1 1.9L31.3 24.2Q32.6 27.6 29.2 27.8H2.8Q-.6 27.6 .7 24.2Z"/></clipPath><g clip-path="url(#csc)"><rect x="-2" y="-2" width="36" height="32" fill="#fdeedd"/><path d="M16 -3L24.2 13.3H7.8Z" fill="#ffa50b"/><path d="M7.8 13.3L16 29H-3L-3 29Z" fill="#16b98b"/><path d="M24.2 13.3L35 29H16Z" fill="#f6093f"/><path d="M-2 26.4H34V30H-2Z" fill="#000" opacity=".28"/></g></svg><div class="t s" style="left:699.2px;top:167.4px;font-size:23.4px;line-height:26px;color:#1e1e1e;letter-spacing:-0.116px;">playdate.css</div><svg style="left:965px;top:165px;" width="30" height="30" viewBox="0 0 30 30"><defs><linearGradient id="g20" x1="0" y1="0" x2="0" y2="1"><stop offset="0" stop-color="#0de00d"/><stop offset=".5" stop-color="#04d804"/><stop offset="1" stop-color="#029a0a"/></linearGradient></defs><circle cx="15" cy="15" r="15" fill="url(#g20)"/><ellipse cx="15" cy="15" rx="6.3" ry="14.2" fill="none" stroke="#74f5bf" stroke-width="1.2"/><path d="M1.4 10.2H28.6M1.4 20H28.6" stroke="#8cf7b6" stroke-width="2.2" fill="none"/></svg><div class="t s" style="left:1002.8px;top:167.4px;font-size:23.4px;line-height:26px;color:#1e1e1e;letter-spacing:0.083px;">index.html</div><svg style="left:1744px;top:166px;" width="28" height="28" viewBox="0 0 28 28"><g fill="none" stroke="#858585" stroke-width="2.3" stroke-linecap="round" stroke-linejoin="round"><path d="M18.5 6.8H3.8M8.4 2L3.4 6.8L8.4 11.6"/><path d="M10 18.6H24.2M19.8 13.8L24.8 18.6L19.8 23.4"/></g><circle cx="21.9" cy="6.8" r="3.2" fill="#ababab"/><circle cx="6" cy="18.6" r="3.2" fill="#ababab"/></svg><svg style="left:1786px;top:165px;" width="32" height="28" viewBox="0 0 32 28"><rect x="1.8" y="1.8" width="14" height="24.4" fill="none" stroke="#cfcfcf" stroke-width="1.6"/><rect x="16.2" y="1.9" width="14" height="24.2" fill="#f6f6f6" stroke="#7a7a7a" stroke-width="2.2"/><rect x="18.6" y="4.3" width="9.2" height="19.4" fill="#c6c6c6"/></svg><svg style="left:619px;top:213px;" width="30" height="30" viewBox="0 0 30 30"><path d="M0 4.5A4.5 4.5 0 0 1 4.5 0H11.5C13.6 0 14.4 .9 15.1 2.9H25.7A4.3 4.3 0 0 1 30 7.2V20H0Z" fill="#0a86cf"/><path d="M0 4.5A4.5 4.5 0 0 1 4.5 0H11.5C13.6 0 14.4 .9 15.1 2.9H25.7A4.3 4.3 0 0 1 30 7.2V9H0Z" fill="#0b7cc2"/><rect x="0" y="5.8" width="30" height="24.2" rx="4.6" fill="#23a2dc"/><rect x="0" y="5.8" width="30" height="23.2" rx="4.6" fill="#3ecafd"/></svg><div class="t s" style="left:657.5px;top:215.7px;font-size:22.5px;line-height:25px;color:#727272;letter-spacing:0.096px;">source</div><svg style="left:730.5px;top:210.5px;" width="18.5" height="35.25" viewBox="0 0 18.5 35.25"><path d="M16.5 2L2 33.25" stroke="#c2c2c2" stroke-width="1.8" fill="none"/></svg><svg style="left:756px;top:214px;" width="32" height="28" viewBox="0 0 32 28"><path d="M13.6 1.6Q16 -1.6 18.4 1.6L31.2 23.6Q32.8 27 29.4 27.4H2.6Q-.8 27 .8 23.6Z" fill="#c8102e" opacity="0"/><clipPath id="csc"><path d="M13.9 1.9Q16 -1.3 18.1 1.9L31.3 24.2Q32.6 27.6 29.2 27.8H2.8Q-.6 27.6 .7 24.2Z"/></clipPath><g clip-path="url(#csc)"><rect x="-2" y="-2" width="36" height="32" fill="#fdeedd"/><path d="M16 -3L24.2 13.3H7.8Z" fill="#ffa50b"/><path d="M7.8 13.3L16 29H-3L-3 29Z" fill="#16b98b"/><path d="M24.2 13.3L35 29H16Z" fill="#f6093f"/><path d="M-2 26.4H34V30H-2Z" fill="#000" opacity=".28"/></g></svg><div class="t s" style="left:795px;top:215.7px;font-size:22.5px;line-height:25px;color:#727272;letter-spacing:0.311px;">playdate.css</div><svg style="left:928.5px;top:210.5px;" width="19" height="35.25" viewBox="0 0 19 35.25"><path d="M17 2L2 33.25" stroke="#c2c2c2" stroke-width="1.8" fill="none"/></svg><svg style="left:955px;top:213px;" width="30" height="30" viewBox="0 0 30 30"><defs><linearGradient id="g21" x1="0" y1="0" x2="0" y2="1"><stop offset="0" stop-color="#ffa24f"/><stop offset="1" stop-color="#f28a3a"/></linearGradient></defs><rect x="1.5" y="1.5" width="27" height="27" rx="5.5" fill="url(#g21)" stroke="#e07a2a" stroke-width="1.6"/></svg><div class="t s" style="left:962.3px;top:216.3px;font-weight:700;font-size:23.5px;line-height:26px;color:#fff;">#</div><div class="t s" style="left:993.5px;top:215.7px;font-size:22.5px;line-height:25px;color:#727272;letter-spacing:0.333px;">html</div><div style="left:594px;top:320px;width:1050px;height:36px;background:#fefde4;"></div><div style="left:594px;top:644px;width:1050px;height:36px;background:#fefde4;"></div><div style="left:594px;top:1040px;width:1050px;height:36px;background:#fefde4;"></div><div style="left:594px;top:968px;width:1050px;height:36px;background:#ffecec;"></div><div style="left:674px;top:320px;width:17.5px;height:36px;background:#fff;"></div><div style="left:674px;top:644px;width:17.5px;height:36px;background:#fff;"></div><div style="left:674px;top:1040px;width:17.5px;height:36px;background:#fff;"></div><div style="left:676.3px;top:283px;width:13.5px;height:70.80000000000001px;background:#e6e6e6;border-radius:0 0 7px 7px;"></div><div style="left:676.3px;top:501.5px;width:13.5px;height:82.5px;background:#ececec;border-radius:7px 7px 7px 7px;"></div><div style="left:674px;top:571.8px;width:17.5px;height:142.9px;background:#fff;border-radius:9px;"></div><div style="left:676.3px;top:574px;width:13.5px;height:138.5px;background:#dedede;border-radius:7px 7px 7px 7px;"></div><div style="left:676.3px;top:861.5px;width:13.5px;height:82.5px;background:#ececec;border-radius:7px 7px 7px 7px;"></div><div style="left:674px;top:931.8px;width:17.5px;height:179.19999999999996px;background:#fff;border-radius:9px;"></div><div style="left:676.3px;top:934px;width:13.5px;height:174.79999999999995px;background:#dedede;border-radius:7px 7px 7px 7px;"></div><div style="left:673.5px;top:968px;width:19px;height:36px;background:#ffecec;"></div><div style="left:676.3px;top:968px;width:13.5px;height:36px;background:#ecd6d6;"></div><svg style="left:603px;top:320px;" width="12" height="36" viewBox="0 0 12 36"><defs><clipPath id="hc320"><rect x="0.5" y="0" width="10.5" height="36" rx="2"/></clipPath></defs><g clip-path="url(#hc320)"><rect width="12" height="36" fill="#e9fbe9"/><path d="M-2 6L14 -6M-2 13L14 1M-2 20L14 8M-2 27L14 15M-2 34L14 22M-2 41L14 29M-2 48L14 36" stroke="#2ecc40" stroke-width="2.9"/></g></svg><svg style="left:603px;top:644px;" width="12" height="36" viewBox="0 0 12 36"><defs><clipPath id="hc644"><rect x="0.5" y="0" width="10.5" height="36" rx="2"/></clipPath></defs><g clip-path="url(#hc644)"><rect width="12" height="36" fill="#e9fbe9"/><path d="M-2 6L14 -6M-2 13L14 1M-2 20L14 8M-2 27L14 15M-2 34L14 22M-2 41L14 29M-2 48L14 36" stroke="#2ecc40" stroke-width="2.9"/></g></svg><svg style="left:603px;top:1040px;" width="12" height="36" viewBox="0 0 12 36"><defs><clipPath id="hc1040"><rect x="0.5" y="0" width="10.5" height="36" rx="2"/></clipPath></defs><g clip-path="url(#hc1040)"><rect width="12" height="36" fill="#e9fbe9"/><path d="M-2 6L14 -6M-2 13L14 1M-2 20L14 8M-2 27L14 15M-2 34L14 22M-2 41L14 29M-2 48L14 36" stroke="#2ecc40" stroke-width="2.9"/></g></svg><div style="left:772.5px;top:608px;width:2px;height:72px;background:#b9d3f2;"></div><div style="left:772.5px;top:968px;width:2px;height:108px;background:#b9d3f2;"></div><div class="t s" style="left:651.66px;top:288.7px;font-size:24px;line-height:27px;color:#8e8e8e;letter-spacing:1.1px;">6</div><div class="t s" style="left:651.66px;top:324.7px;font-size:24px;line-height:27px;color:#505050;letter-spacing:1.1px;">7</div><div class="t s" style="left:651.66px;top:360.7px;font-size:24px;line-height:27px;color:#8e8e8e;letter-spacing:1.1px;">8</div><div class="t s" style="left:651.66px;top:396.7px;font-size:24px;line-height:27px;color:#8e8e8e;letter-spacing:1.1px;">9</div><div class="t s" style="left:637.21px;top:432.7px;font-size:24px;line-height:27px;color:#8e8e8e;letter-spacing:1.1px;">10</div><div class="t s" style="left:638.99px;top:468.7px;font-size:24px;line-height:27px;color:#8e8e8e;letter-spacing:1.1px;">11</div><div class="t s" style="left:637.21px;top:504.7px;font-size:24px;line-height:27px;color:#8e8e8e;letter-spacing:1.1px;">12</div><div class="t s" style="left:637.21px;top:540.7px;font-size:24px;line-height:27px;color:#8e8e8e;letter-spacing:1.1px;">13</div><div class="t s" style="left:637.21px;top:576.7px;font-size:24px;line-height:27px;color:#8e8e8e;letter-spacing:1.1px;">14</div><div class="t s" style="left:637.21px;top:612.7px;font-size:24px;line-height:27px;color:#8e8e8e;letter-spacing:1.1px;">15</div><div class="t s" style="left:637.21px;top:648.7px;font-size:24px;line-height:27px;color:#505050;letter-spacing:1.1px;">16</div><div class="t s" style="left:637.21px;top:684.7px;font-size:24px;line-height:27px;color:#8e8e8e;letter-spacing:1.1px;">17</div><div class="t s" style="left:637.21px;top:720.7px;font-size:24px;line-height:27px;color:#8e8e8e;letter-spacing:1.1px;">18</div><div class="t s" style="left:637.21px;top:756.7px;font-size:24px;line-height:27px;color:#8e8e8e;letter-spacing:1.1px;">19</div><div class="t s" style="left:637.21px;top:792.7px;font-size:24px;line-height:27px;color:#8e8e8e;letter-spacing:1.1px;">20</div><div class="t s" style="left:637.21px;top:828.7px;font-size:24px;line-height:27px;color:#8e8e8e;letter-spacing:1.1px;">21</div><div class="t s" style="left:637.21px;top:864.7px;font-size:24px;line-height:27px;color:#8e8e8e;letter-spacing:1.1px;">22</div><div class="t s" style="left:637.21px;top:900.7px;font-size:24px;line-height:27px;color:#8e8e8e;letter-spacing:1.1px;">23</div><div class="t s" style="left:637.21px;top:936.7px;font-size:24px;line-height:27px;color:#8e8e8e;letter-spacing:1.1px;">24</div><div class="t s" style="left:637.21px;top:1008.7px;font-size:24px;line-height:27px;color:#8e8e8e;letter-spacing:1.1px;">26</div><div class="t s" style="left:637.21px;top:1044.7px;font-size:24px;line-height:27px;color:#505050;letter-spacing:1.1px;">27</div><div class="t s" style="left:637.21px;top:1080.7px;font-size:24px;line-height:27px;color:#8e8e8e;letter-spacing:1.1px;">28</div><div class="t s" style="left:637.21px;top:1116.7px;font-size:24px;line-height:27px;color:#8e8e8e;letter-spacing:1.1px;">29</div><div class="t s" style="left:637.21px;top:1152.7px;font-size:24px;line-height:27px;color:#8e8e8e;letter-spacing:1.1px;">30</div><svg style="left:642.5px;top:974.5px;" width="22" height="23" viewBox="0 0 22 23"><defs><linearGradient id="g22" x1="0" y1="0" x2="0" y2="1"><stop offset="0" stop-color="#ff5a6a"/><stop offset="1" stop-color="#ee1f3c"/></linearGradient></defs><path d="M6.4 .3H15.6L21.7 6.4V15.6L15.6 21.7H6.4L.3 15.6V6.4Z" fill="#c9bcbc" opacity=".5" transform="translate(0 1)"/><path d="M6.4 .3H15.6L21.7 6.4V15.6L15.6 21.7H6.4L.3 15.6V6.4Z" fill="url(#g22)"/><rect x="9.3" y="4.2" width="3.4" height="9" rx="1.7" fill="#fff"/><circle cx="11" cy="16.6" r="2" fill="#fff"/></svg><svg style="left:707px;top:991px;" width="14" height="12" viewBox="0 0 14 12"><path d="M2.3 9.3L7 4.2L11.7 9.3" fill="none" stroke="#ff2d3f" stroke-width="3.2" stroke-linecap="round" stroke-linejoin="round"/></svg><div class="t m" style="left:771.1px;top:288.7px;font-size:24px;line-height:28px;color:#1c1c1c;"><span style="color:#0b5cb5;">font<span class="hy">-</span>size</span><span style="color:#1c1c1c;">:</span> <span style="color:#d6205f;">3.8px</span><span style="color:#1c1c1c;">;</span></div><div class="t m" style="left:771.1px;top:324.7px;font-size:24px;line-height:28px;color:#1c1c1c;"><span style="color:#0b5cb5;">pad<span class="hy">-</span>to</span>  <span style="color:#c6c6b4;">(uncommitted)</span></div><div class="t m" style="left:713.3px;top:468.7px;font-size:24px;line-height:28px;color:#1c1c1c;"><span style="color:#d9782f;font-weight:700;">@media</span> <span style="color:#1c1c1c;">screen</span> <span style="color:#0b5cb5;">and</span> <span style="color:#1c1c1c;">(</span><span style="color:#7d32aa;">min<span class="hy">-</span>width</span><span style="color:#1c1c1c;">:</span> <span style="color:#d6205f;">380px</span><span style="color:#1c1c1c;">)</span> <span style="color:#0b5cb5;">and</span> <span style="color:#1c1c1c;">(</span><span style="color:#7d32aa;">min<span class="hy">-</span>height</span><span style="color:#1c1c1c;">:</span> <span style="color:#d6205f;">380px</span><span style="color:#1c1c1c;">)</span></div><div class="t m" style="left:713.3px;top:504.7px;font-size:24px;line-height:28px;color:#1c1c1c;"><span style="color:#1c1c1c;">{</span></div><div class="t m" style="left:771.1px;top:540.7px;font-size:24px;line-height:28px;color:#1c1c1c;"><span style="color:#1c1c1c;font-weight:700;">html</span></div><div class="t m" style="left:771.1px;top:576.7px;font-size:24px;line-height:28px;color:#1c1c1c;"><span style="color:#1c1c1c;">{</span></div><div class="t m" style="left:828.9px;top:612.7px;font-size:24px;line-height:28px;color:#1c1c1c;"><span style="color:#0b5cb5;">font<span class="hy">-</span>size</span><span style="color:#1c1c1c;">:</span> <span style="color:#d6205f;">1vmin</span><span style="color:#1c1c1c;">;</span></div><div class="t m" style="left:828.9px;top:648.7px;font-size:24px;line-height:28px;color:#1c1c1c;"><span style="color:#0b5cb5;">pad<span class="hy">-</span>to</span></div><div class="t m" style="left:771.1px;top:684.7px;font-size:24px;line-height:28px;color:#1c1c1c;"><span style="color:#1c1c1c;">}</span></div><div class="t m" style="left:713.3px;top:720.7px;font-size:24px;line-height:28px;color:#1c1c1c;"><span style="color:#1c1c1c;">}</span></div><div class="t m" style="left:713.3px;top:792.7px;font-size:24px;line-height:28px;color:#1c1c1c;"><span style="color:#6e6e6e;font-style:italic;">/* Stop auto<span class="hy">-</span>resizing */</span></div><div class="t m" style="left:713.3px;top:828.7px;font-size:24px;line-height:28px;color:#1c1c1c;"><span style="color:#d9782f;font-weight:700;">@media</span> <span style="color:#1c1c1c;">screen</span> <span style="color:#0b5cb5;">and</span> <span style="color:#1c1c1c;">(</span><span style="color:#7d32aa;">min<span class="hy">-</span>width</span><span style="color:#1c1c1c;">:</span> <span style="color:#d6205f;">1000px</span><span style="color:#1c1c1c;">)</span> <span style="color:#0b5cb5;">and</span> <span style="color:#1c1c1c;">(</span><span style="color:#7d32aa;">min<span class="hy">-</span>height</span><span style="color:#1c1c1c;">:</span> <span style="color:#d6205f;">1000px</span><span style="color:#1c1c1c;">)</span></div><div class="t m" style="left:713.3px;top:864.7px;font-size:24px;line-height:28px;color:#1c1c1c;"><span style="color:#1c1c1c;">{</span></div><div class="t m" style="left:771.1px;top:900.7px;font-size:24px;line-height:28px;color:#1c1c1c;"><span style="color:#1c1c1c;font-weight:700;">html</span></div><div class="t m" style="left:771.1px;top:936.7px;font-size:24px;line-height:28px;color:#1c1c1c;"><span style="color:#1c1c1c;">{</span></div><div class="t m" style="left:828.9px;top:972.7px;font-size:24px;line-height:28px;color:#1c1c1c;"><span style="color:#0b5cb5;">mrgan</span><span style="color:#1c1c1c;">:</span> <span style="color:#d6205f;">0</span><span style="color:#1c1c1c;">;</span></div><div class="t m" style="left:828.9px;top:1008.7px;font-size:24px;line-height:28px;color:#1c1c1c;"><span style="color:#0b5cb5;">font<span class="hy">-</span>size</span><span style="color:#1c1c1c;">:</span> <span style="color:#d6205f;">10px</span><span style="color:#1c1c1c;">;</span></div><div class="t m" style="left:828.9px;top:1044.7px;font-size:24px;line-height:28px;color:#1c1c1c;"><span style="color:#0b5cb5;">pad<span class="hy">-</span>to</span></div><div class="t m" style="left:771.1px;top:1080.7px;font-size:24px;line-height:28px;color:#1c1c1c;"><span style="color:#1c1c1c;">}</span></div><div class="t m" style="left:713.3px;top:1116.7px;font-size:24px;line-height:28px;color:#1c1c1c;"><span style="color:#1c1c1c;">}</span></div><div style="left:858px;top:320px;width:2px;height:36px;background:#000;"></div><div style="left:916px;top:644px;width:2px;height:36px;background:#000;"></div><div style="left:916px;top:1040px;width:2px;height:36px;background:#000;"></div><div style="left:594px;top:248px;width:1050px;height:35px;background:#fff;"></div><div style="left:594px;top:282.3px;width:1050px;height:1.5px;background:#d6d6d6;"></div><div style="left:594px;top:283.8px;width:1050px;height:13px;background:linear-gradient(#00000012,#00000000);"></div><div class="t s" style="left:651.66px;top:252.5px;font-size:24px;line-height:27px;color:#8e8e8e;letter-spacing:1.1px;">4</div><div class="t m" style="left:713.3px;top:252.5px;font-size:24px;line-height:28px;color:#1c1c1c;"><span style="color:#1c1c1c;font-weight:700;">html</span></div><div style="left:1643.5px;top:248px;width:1.8px;height:928px;background:#d2d2d2;"></div><svg style="left:1646px;top:245.2px;" width="186" height="931" viewBox="0 0 186 931"><rect x="23" y="0.5" width="15.7" height="4" fill="#f0c090"/><rect x="41.1" y="0.5" width="5.6" height="4" fill="#9fc4cf"/><rect x="49.1" y="0.5" width="1.7" height="4" fill="#7a7a7a"/><rect x="50.8" y="0.5" width="41.1" height="4" fill="#eea897"/><rect x="91.8" y="0.5" width="1.4" height="4" fill="#7a7a7a"/><rect x="95.4" y="0.5" width="1.4" height="4" fill="#d9d9d9"/><rect x="23" y="12.5" width="7.7" height="4" fill="#d9d9d9"/><rect x="23" y="18.5" width="1.9" height="4" fill="#7a7a7a"/><rect x="31" y="24.5" width="19.8" height="4" fill="#9bbce6"/><rect x="53.2" y="24.5" width="1.7" height="4" fill="#d2d2d2"/><rect x="59.2" y="24.5" width="12.1" height="4" fill="#f0a6c3"/><rect x="71.3" y="24.5" width="1.7" height="4" fill="#d2d2d2"/><rect x="31" y="30.5" width="13.8" height="4" fill="#9bbce6"/><rect x="23" y="36.5" width="1.9" height="4" fill="#7a7a7a"/><rect x="23" y="48.5" width="3.6" height="4" fill="#bfbfbf"/><rect x="29" y="48.5" width="11.6" height="4" fill="#bfbfbf"/><rect x="43" y="48.5" width="29.7" height="4" fill="#bfbfbf"/><rect x="77.3" y="48.5" width="3.6" height="4" fill="#bfbfbf"/><rect x="23" y="54.5" width="14" height="4" fill="#e7b78f"/><rect x="39.2" y="54.5" width="13.5" height="4" fill="#bfbfbf"/><rect x="55.1" y="54.5" width="5.8" height="4" fill="#9bbce6"/><rect x="65" y="54.5" width="1.4" height="4" fill="#7a7a7a"/><rect x="66.5" y="54.5" width="20.5" height="4" fill="#c39ddb"/><rect x="88.9" y="54.5" width="1.7" height="4" fill="#d2d2d2"/><rect x="95" y="54.5" width="12.6" height="4" fill="#f0a6c3"/><rect x="107.5" y="54.5" width="1.4" height="4" fill="#7a7a7a"/><rect x="111.1" y="54.5" width="5.6" height="4" fill="#9bbce6"/><rect x="121.3" y="54.5" width="1.4" height="4" fill="#7a7a7a"/><rect x="122.7" y="54.5" width="24.6" height="4" fill="#c39ddb"/><rect x="147.4" y="54.5" width="1.4" height="4" fill="#d2d2d2"/><rect x="153.2" y="54.5" width="12.3" height="4" fill="#f0a6c3"/><rect x="165.5" y="54.5" width="1.4" height="4" fill="#7a7a7a"/><rect x="23" y="60.5" width="1.9" height="4" fill="#7a7a7a"/><rect x="31" y="66.5" width="7.7" height="4" fill="#bfbfbf"/><rect x="31" y="72.5" width="1.7" height="4" fill="#7a7a7a"/><rect x="41.1" y="78.5" width="19.8" height="4" fill="#9bbce6"/><rect x="63.1" y="78.5" width="1.7" height="4" fill="#d2d2d2"/><rect x="66.9" y="78.5" width="12.3" height="4" fill="#f0a6c3"/><rect x="79.3" y="78.5" width="1.7" height="4" fill="#d2d2d2"/><rect x="41.1" y="84.5" width="13.8" height="4" fill="#9bbce6"/><rect x="31" y="90.5" width="1.7" height="4" fill="#7a7a7a"/><rect x="23" y="96.5" width="1.9" height="4" fill="#7a7a7a"/><rect x="23" y="108.5" width="3.6" height="4" fill="#bfbfbf"/><rect x="29" y="108.5" width="8" height="4" fill="#bfbfbf"/><rect x="41.1" y="108.5" width="29.7" height="4" fill="#bfbfbf"/><rect x="74.9" y="108.5" width="4.1" height="4" fill="#bfbfbf"/><rect x="23" y="114.5" width="14" height="4" fill="#e7b78f"/><rect x="39.2" y="114.5" width="13.5" height="4" fill="#bfbfbf"/><rect x="55.1" y="114.5" width="5.8" height="4" fill="#9bbce6"/><rect x="65" y="114.5" width="1.4" height="4" fill="#7a7a7a"/><rect x="66.5" y="114.5" width="20.5" height="4" fill="#c39ddb"/><rect x="88.9" y="114.5" width="1.7" height="4" fill="#d2d2d2"/><rect x="95" y="114.5" width="14" height="4" fill="#f0a6c3"/><rect x="109" y="114.5" width="1.7" height="4" fill="#7a7a7a"/><rect x="113.1" y="114.5" width="5.6" height="4" fill="#9bbce6"/><rect x="123.2" y="114.5" width="1.4" height="4" fill="#7a7a7a"/><rect x="124.7" y="114.5" width="24.6" height="4" fill="#c39ddb"/><rect x="149.3" y="114.5" width="1.7" height="4" fill="#d2d2d2"/><rect x="155.1" y="114.5" width="14" height="4" fill="#f0a6c3"/><rect x="169.1" y="114.5" width="1.7" height="4" fill="#7a7a7a"/><rect x="23" y="120.5" width="1.9" height="4" fill="#7a7a7a"/><rect x="31" y="126.5" width="7.7" height="4" fill="#bfbfbf"/><rect x="31" y="132.5" width="1.7" height="4" fill="#7a7a7a"/><rect x="41.1" y="138.5" width="12.1" height="4" fill="#9bbce6"/><rect x="53.2" y="138.5" width="1.7" height="4" fill="#d2d2d2"/><rect x="59.2" y="138.5" width="1.7" height="4" fill="#f0a6c3"/><rect x="60.9" y="138.5" width="1.9" height="4" fill="#d2d2d2"/><rect x="41.1" y="144.5" width="19.8" height="4" fill="#9bbce6"/><rect x="63.1" y="144.5" width="1.7" height="4" fill="#d2d2d2"/><rect x="66.9" y="144.5" width="8" height="4" fill="#f0a6c3"/><rect x="76.9" y="144.5" width="1.7" height="4" fill="#d2d2d2"/><rect x="41.1" y="150.5" width="13.8" height="4" fill="#9bbce6"/><rect x="31" y="156.5" width="1.7" height="4" fill="#7a7a7a"/><rect x="23" y="162.5" width="1.9" height="4" fill="#7a7a7a"/><rect x="23" y="174.5" width="7.7" height="4" fill="#d9d9d9"/><rect x="23" y="180.5" width="1.9" height="4" fill="#7a7a7a"/><rect x="31" y="186.5" width="19.8" height="4" fill="#9bbce6"/><rect x="53.2" y="186.5" width="1.7" height="4" fill="#d2d2d2"/><rect x="59.2" y="186.5" width="7.7" height="4" fill="#f0a6c3"/><rect x="66.9" y="186.5" width="1.9" height="4" fill="#d2d2d2"/><rect x="31" y="192.5" width="25.8" height="4" fill="#9bbce6"/><rect x="59.2" y="192.5" width="1.7" height="4" fill="#d2d2d2"/><rect x="63.1" y="192.5" width="1.9" height="4" fill="#f0a6c3"/><rect x="65" y="192.5" width="1.9" height="4" fill="#d2d2d2"/><rect x="31" y="198.5" width="13.8" height="4" fill="#9bbce6"/><rect x="47.1" y="198.5" width="1.7" height="4" fill="#d2d2d2"/><rect x="51" y="198.5" width="1.9" height="4" fill="#f0a6c3"/><rect x="52.9" y="198.5" width="1.9" height="4" fill="#d2d2d2"/><rect x="31" y="204.5" width="15.7" height="4" fill="#9bbce6"/><rect x="49.1" y="204.5" width="1.7" height="4" fill="#d2d2d2"/><rect x="52.9" y="204.5" width="1.9" height="4" fill="#f0a6c3"/><rect x="54.9" y="204.5" width="1.9" height="4" fill="#d2d2d2"/><rect x="31" y="210.5" width="25.8" height="4" fill="#9bbce6"/><rect x="59.2" y="210.5" width="1.7" height="4" fill="#d2d2d2"/><rect x="63.1" y="210.5" width="19.8" height="4" fill="#eea897"/><rect x="85.1" y="210.5" width="1.7" height="4" fill="#d2d2d2"/><rect x="88.9" y="210.5" width="20" height="4" fill="#c9bca9"/><rect x="110.9" y="210.5" width="1.7" height="4" fill="#d2d2d2"/><rect x="115" y="210.5" width="23.9" height="4" fill="#c9bca9"/><rect x="141.1" y="210.5" width="1.7" height="4" fill="#d2d2d2"/><rect x="23" y="216.5" width="1.9" height="4" fill="#7a7a7a"/><rect x="23" y="228.5" width="1.9" height="4" fill="#d9d9d9"/><rect x="23" y="234.5" width="1.9" height="4" fill="#7a7a7a"/><rect x="31" y="240.5" width="12.1" height="4" fill="#9bbce6"/><rect x="43" y="240.5" width="1.7" height="4" fill="#d2d2d2"/><rect x="49.1" y="240.5" width="15.9" height="4" fill="#c9bca9"/><rect x="65" y="240.5" width="1.9" height="4" fill="#d2d2d2"/><rect x="23" y="246.5" width="1.9" height="4" fill="#7a7a7a"/><rect x="23" y="258.5" width="5.8" height="4" fill="#d9d9d9"/><rect x="23" y="264.5" width="3.9" height="4" fill="#d9d9d9"/><rect x="23" y="270.5" width="7.7" height="4" fill="#d9d9d9"/><rect x="23" y="276.5" width="1.9" height="4" fill="#7a7a7a"/><rect x="31" y="288.5" width="19.8" height="4" fill="#9bbce6"/><rect x="53.2" y="288.5" width="1.7" height="4" fill="#d2d2d2"/><rect x="59.2" y="288.5" width="15.7" height="4" fill="#f0a6c3"/><rect x="74.9" y="288.5" width="1.9" height="4" fill="#d2d2d2"/><rect x="31" y="294.5" width="13.8" height="4" fill="#9bbce6"/><rect x="47.1" y="294.5" width="1.7" height="4" fill="#d2d2d2"/><rect x="51" y="294.5" width="7.7" height="4" fill="#f0a6c3"/><rect x="63.1" y="294.5" width="7.7" height="4" fill="#c9bca9"/><rect x="73" y="294.5" width="1.7" height="4" fill="#d2d2d2"/><rect x="31" y="300.5" width="15.7" height="4" fill="#9bbce6"/><rect x="49.1" y="300.5" width="1.7" height="4" fill="#d2d2d2"/><rect x="52.9" y="300.5" width="1.9" height="4" fill="#f0a6c3"/><rect x="59.2" y="300.5" width="7.7" height="4" fill="#f0a6c3"/><rect x="66.9" y="300.5" width="1.9" height="4" fill="#d2d2d2"/><rect x="23" y="306.5" width="1.9" height="4" fill="#7a7a7a"/><rect x="23" y="318.5" width="3.9" height="4" fill="#d9d9d9"/><rect x="26.9" y="318.5" width="17.9" height="4" fill="#e7b78f"/><rect x="23" y="324.5" width="1.9" height="4" fill="#7a7a7a"/><rect x="31" y="330.5" width="15.7" height="4" fill="#9bbce6"/><rect x="49.1" y="330.5" width="1.7" height="4" fill="#d2d2d2"/><rect x="52.9" y="330.5" width="8" height="4" fill="#c9bca9"/><rect x="63.1" y="330.5" width="1.7" height="4" fill="#d2d2d2"/><rect x="23" y="336.5" width="1.9" height="4" fill="#7a7a7a"/><rect x="23" y="348.5" width="1.9" height="4" fill="#d9d9d9"/><rect x="24.9" y="348.5" width="13.8" height="4" fill="#e7b78f"/><rect x="41.1" y="348.5" width="3.6" height="4" fill="#d9d9d9"/><rect x="47.1" y="348.5" width="17.6" height="4" fill="#e7b78f"/><rect x="23" y="354.5" width="1.9" height="4" fill="#7a7a7a"/><rect x="31" y="360.5" width="15.7" height="4" fill="#9bbce6"/><rect x="49.1" y="360.5" width="1.7" height="4" fill="#d2d2d2"/><rect x="52.9" y="360.5" width="12.1" height="4" fill="#c9bca9"/><rect x="65" y="360.5" width="1.9" height="4" fill="#d2d2d2"/><rect x="23" y="366.5" width="1.9" height="4" fill="#7a7a7a"/><rect x="23" y="378.5" width="1.9" height="4" fill="#d9d9d9"/><rect x="24.9" y="378.5" width="13.8" height="4" fill="#e7b78f"/><rect x="41.1" y="378.5" width="7.7" height="4" fill="#d9d9d9"/><rect x="51" y="378.5" width="1.9" height="4" fill="#d9d9d9"/><rect x="52.9" y="378.5" width="17.9" height="4" fill="#e7b78f"/><rect x="23" y="384.5" width="1.9" height="4" fill="#7a7a7a"/><rect x="31" y="390.5" width="15.7" height="4" fill="#9bbce6"/><rect x="49.1" y="390.5" width="1.7" height="4" fill="#d2d2d2"/><rect x="52.9" y="390.5" width="8" height="4" fill="#c9bca9"/><rect x="63.1" y="390.5" width="1.7" height="4" fill="#d2d2d2"/><rect x="23" y="396.5" width="1.9" height="4" fill="#7a7a7a"/><rect x="23" y="408.5" width="1.9" height="4" fill="#d9d9d9"/><rect x="24.9" y="408.5" width="23.9" height="4" fill="#b9bdf6"/><rect x="51" y="408.5" width="1.9" height="4" fill="#7a7a7a"/><rect x="31" y="414.5" width="30" height="4" fill="#9bbce6"/><rect x="63.1" y="414.5" width="1.7" height="4" fill="#d2d2d2"/><rect x="66.9" y="414.5" width="12.3" height="4" fill="#f0a6c3"/><rect x="79.3" y="414.5" width="1.7" height="4" fill="#d2d2d2"/><rect x="23" y="420.5" width="1.9" height="4" fill="#7a7a7a"/><rect x="23" y="438.5" width="14" height="4" fill="#d9d9d9"/><rect x="23" y="444.5" width="1.9" height="4" fill="#7a7a7a"/><rect x="31" y="450.5" width="13.8" height="4" fill="#9bbce6"/><rect x="47.1" y="450.5" width="1.7" height="4" fill="#d2d2d2"/><rect x="51" y="450.5" width="1.9" height="4" fill="#f0a6c3"/><rect x="55.1" y="450.5" width="7.7" height="4" fill="#c9bca9"/><rect x="65" y="450.5" width="1.7" height="4" fill="#d2d2d2"/><rect x="31" y="456.5" width="36" height="4" fill="#9bbce6"/><rect x="66.9" y="456.5" width="1.9" height="4" fill="#d2d2d2"/><rect x="73" y="456.5" width="12.1" height="4" fill="#c9bca9"/><rect x="85.1" y="456.5" width="1.9" height="4" fill="#d2d2d2"/><rect x="31" y="462.5" width="44" height="4" fill="#9bbce6"/><rect x="77.1" y="462.5" width="1.7" height="4" fill="#d2d2d2"/><rect x="83.1" y="462.5" width="5.8" height="4" fill="#f0a6c3"/><rect x="91.1" y="462.5" width="3.9" height="4" fill="#f0a6c3"/><rect x="97.1" y="462.5" width="1.7" height="4" fill="#d2d2d2"/><rect x="31" y="468.5" width="39.9" height="4" fill="#9bbce6"/><rect x="73" y="468.5" width="1.7" height="4" fill="#d2d2d2"/><rect x="77.1" y="468.5" width="19.8" height="4" fill="#c9bca9"/><rect x="99.1" y="468.5" width="1.7" height="4" fill="#d2d2d2"/><rect x="23" y="474.5" width="1.9" height="4" fill="#7a7a7a"/><rect x="23" y="486.5" width="1.9" height="4" fill="#d9d9d9"/><rect x="24.9" y="486.5" width="13.8" height="4" fill="#b9bdf6"/><rect x="41.1" y="486.5" width="13.8" height="4" fill="#d9d9d9"/><rect x="23" y="492.5" width="1.9" height="4" fill="#7a7a7a"/><rect x="31" y="498.5" width="31.9" height="4" fill="#9bbce6"/><rect x="65" y="498.5" width="1.7" height="4" fill="#d2d2d2"/><rect x="71.1" y="498.5" width="12.1" height="4" fill="#f0a6c3"/><rect x="83.1" y="498.5" width="1.9" height="4" fill="#d2d2d2"/><rect x="23" y="504.5" width="1.9" height="4" fill="#7a7a7a"/><rect x="23" y="516.5" width="5.8" height="4" fill="#d9d9d9"/><rect x="23" y="522.5" width="1.9" height="4" fill="#7a7a7a"/><rect x="31" y="528.5" width="13.8" height="4" fill="#9bbce6"/><rect x="47.1" y="528.5" width="1.7" height="4" fill="#d2d2d2"/><rect x="51" y="528.5" width="1.9" height="4" fill="#f0a6c3"/><rect x="55.1" y="528.5" width="7.7" height="4" fill="#f0a6c3"/><rect x="65" y="528.5" width="1.7" height="4" fill="#d2d2d2"/><rect x="23" y="534.5" width="1.9" height="4" fill="#7a7a7a"/><rect x="23" y="546.5" width="7.7" height="4" fill="#d9d9d9"/><rect x="30.7" y="546.5" width="6.3" height="4" fill="#e7b78f"/><rect x="23" y="552.5" width="1.9" height="4" fill="#7a7a7a"/><rect x="31" y="558.5" width="15.7" height="4" fill="#9bbce6"/><rect x="49.1" y="558.5" width="1.7" height="4" fill="#d2d2d2"/><rect x="52.9" y="558.5" width="11.8" height="4" fill="#f0a6c3"/><rect x="66.9" y="558.5" width="12.1" height="4" fill="#f0a6c3"/><rect x="83.1" y="558.5" width="13.8" height="4" fill="#f0a6c3"/><rect x="99.1" y="558.5" width="12.1" height="4" fill="#f0a6c3"/><rect x="111.1" y="558.5" width="1.7" height="4" fill="#d2d2d2"/><rect x="31" y="564.5" width="44" height="4" fill="#9bbce6"/><rect x="77.1" y="564.5" width="1.7" height="4" fill="#d2d2d2"/><rect x="83.1" y="564.5" width="5.8" height="4" fill="#f0a6c3"/><rect x="88.9" y="564.5" width="1.9" height="4" fill="#d2d2d2"/><rect x="31" y="570.5" width="44" height="4" fill="#9bbce6"/><rect x="77.1" y="570.5" width="1.7" height="4" fill="#d2d2d2"/><rect x="83.1" y="570.5" width="11.8" height="4" fill="#c9bca9"/><rect x="95" y="570.5" width="1.9" height="4" fill="#d2d2d2"/><rect x="23" y="576.5" width="1.9" height="4" fill="#7a7a7a"/><rect x="23" y="588.5" width="7.7" height="4" fill="#d9d9d9"/><rect x="30.7" y="588.5" width="14" height="4" fill="#e7b78f"/><rect x="23" y="594.5" width="1.9" height="4" fill="#7a7a7a"/><rect x="31" y="600.5" width="15.7" height="4" fill="#9bbce6"/><rect x="49.1" y="600.5" width="1.7" height="4" fill="#d2d2d2"/><rect x="52.9" y="600.5" width="11.8" height="4" fill="#f0a6c3"/><rect x="66.9" y="600.5" width="12.1" height="4" fill="#f0a6c3"/><rect x="83.1" y="600.5" width="13.8" height="4" fill="#f0a6c3"/><rect x="99.1" y="600.5" width="12.1" height="4" fill="#f0a6c3"/><rect x="111.1" y="600.5" width="1.7" height="4" fill="#d2d2d2"/><rect x="31" y="606.5" width="37.9" height="4" fill="#9bbce6"/><rect x="71.1" y="606.5" width="1.7" height="4" fill="#d2d2d2"/><rect x="74.9" y="606.5" width="6" height="4" fill="#f0a6c3"/><rect x="83.1" y="606.5" width="1.7" height="4" fill="#d2d2d2"/><rect x="31" y="612.5" width="37.9" height="4" fill="#9bbce6"/><rect x="71.1" y="612.5" width="1.7" height="4" fill="#d2d2d2"/><rect x="74.9" y="612.5" width="12.1" height="4" fill="#c9bca9"/><rect x="87" y="612.5" width="1.9" height="4" fill="#d2d2d2"/><rect x="23" y="618.5" width="1.9" height="4" fill="#7a7a7a"/><rect x="23" y="630.5" width="7.7" height="4" fill="#d9d9d9"/><rect x="30.7" y="630.5" width="6.3" height="4" fill="#e7b78f"/><rect x="41.1" y="630.5" width="3.6" height="4" fill="#d9d9d9"/><rect x="23" y="636.5" width="7.7" height="4" fill="#d9d9d9"/><rect x="30.7" y="636.5" width="14" height="4" fill="#e7b78f"/><rect x="49.1" y="636.5" width="1.7" height="4" fill="#d9d9d9"/><rect x="23" y="642.5" width="1.9" height="4" fill="#7a7a7a"/><rect x="31" y="648.5" width="15.7" height="4" fill="#9bbce6"/><rect x="49.1" y="648.5" width="1.7" height="4" fill="#d2d2d2"/><rect x="52.9" y="648.5" width="28" height="4" fill="#c9bca9"/><rect x="83.1" y="648.5" width="1.7" height="4" fill="#d2d2d2"/><rect x="31" y="654.5" width="36" height="4" fill="#9bbce6"/><rect x="66.9" y="654.5" width="1.9" height="4" fill="#d2d2d2"/><rect x="73" y="654.5" width="8" height="4" fill="#c9bca9"/><rect x="83.1" y="654.5" width="1.7" height="4" fill="#d2d2d2"/><rect x="31" y="660.5" width="19.8" height="4" fill="#9bbce6"/><rect x="53.2" y="660.5" width="1.7" height="4" fill="#d2d2d2"/><rect x="59.2" y="660.5" width="7.7" height="4" fill="#f0a6c3"/><rect x="66.9" y="660.5" width="1.9" height="4" fill="#d2d2d2"/><rect x="31" y="666.5" width="25.8" height="4" fill="#9bbce6"/><rect x="59.2" y="666.5" width="1.7" height="4" fill="#d2d2d2"/><rect x="63.1" y="666.5" width="5.8" height="4" fill="#f0a6c3"/><rect x="71.1" y="666.5" width="1.7" height="4" fill="#d2d2d2"/><rect x="31" y="672.5" width="12.1" height="4" fill="#9bbce6"/><rect x="43" y="672.5" width="1.7" height="4" fill="#d2d2d2"/><rect x="49.1" y="672.5" width="25.8" height="4" fill="#c9bca9"/><rect x="74.9" y="672.5" width="1.9" height="4" fill="#d2d2d2"/><rect x="31" y="678.5" width="37.9" height="4" fill="#9bbce6"/><rect x="71.1" y="678.5" width="1.7" height="4" fill="#d2d2d2"/><rect x="74.9" y="678.5" width="6" height="4" fill="#9fc4cf"/><rect x="83.1" y="678.5" width="1.7" height="4" fill="#7a7a7a"/><rect x="84.8" y="678.5" width="56" height="4" fill="#eea897"/><rect x="143" y="678.5" width="1.7" height="4" fill="#7a7a7a"/><rect x="144.7" y="678.5" width="1.9" height="4" fill="#d2d2d2"/><rect x="31" y="684.5" width="36" height="4" fill="#9bbce6"/><rect x="66.9" y="684.5" width="1.9" height="4" fill="#d2d2d2"/><rect x="73" y="684.5" width="15.9" height="4" fill="#c9bca9"/><rect x="88.9" y="684.5" width="1.9" height="4" fill="#d2d2d2"/><rect x="31" y="690.5" width="39.9" height="4" fill="#9bbce6"/><rect x="73" y="690.5" width="1.7" height="4" fill="#d2d2d2"/><rect x="77.1" y="690.5" width="19.8" height="4" fill="#c9bca9"/><rect x="99.1" y="690.5" width="1.7" height="4" fill="#d2d2d2"/><rect x="31" y="696.5" width="44" height="4" fill="#9bbce6"/><rect x="77.1" y="696.5" width="1.7" height="4" fill="#d2d2d2"/><rect x="83.1" y="696.5" width="13.8" height="4" fill="#c9bca9"/><rect x="99.1" y="696.5" width="14" height="4" fill="#c9bca9"/><rect x="113.1" y="696.5" width="1.7" height="4" fill="#d2d2d2"/><rect x="23" y="702.5" width="1.9" height="4" fill="#7a7a7a"/><rect x="23" y="714.5" width="14" height="4" fill="#d9d9d9"/><rect x="23" y="720.5" width="1.9" height="4" fill="#7a7a7a"/><rect x="31" y="726.5" width="13.8" height="4" fill="#9bbce6"/><rect x="47.1" y="726.5" width="1.7" height="4" fill="#d2d2d2"/><rect x="51" y="726.5" width="1.9" height="4" fill="#f0a6c3"/><rect x="55.1" y="726.5" width="7.7" height="4" fill="#c9bca9"/><rect x="65" y="726.5" width="1.7" height="4" fill="#d2d2d2"/><rect x="31" y="732.5" width="19.8" height="4" fill="#9bbce6"/><rect x="53.2" y="732.5" width="1.7" height="4" fill="#d2d2d2"/><rect x="59.2" y="732.5" width="7.7" height="4" fill="#f0a6c3"/><rect x="66.9" y="732.5" width="1.9" height="4" fill="#d2d2d2"/><rect x="31" y="738.5" width="15.7" height="4" fill="#9bbce6"/><rect x="49.1" y="738.5" width="1.7" height="4" fill="#d2d2d2"/><rect x="52.9" y="738.5" width="8" height="4" fill="#f0a6c3"/><rect x="65" y="738.5" width="1.7" height="4" fill="#f0a6c3"/><rect x="71.1" y="738.5" width="1.7" height="4" fill="#f0a6c3"/><rect x="74.9" y="738.5" width="1.9" height="4" fill="#f0a6c3"/><rect x="76.9" y="738.5" width="1.9" height="4" fill="#d2d2d2"/><rect x="31" y="744.5" width="17.9" height="4" fill="#9bbce6"/><rect x="51" y="744.5" width="1.7" height="4" fill="#d2d2d2"/><rect x="55.1" y="744.5" width="17.6" height="4" fill="#c9bca9"/><rect x="74.9" y="744.5" width="1.9" height="4" fill="#d2d2d2"/><rect x="31" y="750.5" width="17.9" height="4" fill="#9bbce6"/><rect x="51" y="750.5" width="1.7" height="4" fill="#d2d2d2"/><rect x="55.1" y="750.5" width="13.8" height="4" fill="#c9bca9"/><rect x="71.1" y="750.5" width="1.7" height="4" fill="#d2d2d2"/><rect x="31" y="756.5" width="23.9" height="4" fill="#9bbce6"/><rect x="54.9" y="756.5" width="1.9" height="4" fill="#d2d2d2"/><rect x="61.1" y="756.5" width="7.7" height="4" fill="#9fc4cf"/><rect x="71.1" y="756.5" width="1.7" height="4" fill="#7a7a7a"/><rect x="72.7" y="756.5" width="16.2" height="4" fill="#f0a6c3"/><rect x="91.1" y="756.5" width="1.7" height="4" fill="#d2d2d2"/><rect x="97.1" y="756.5" width="14" height="4" fill="#f0a6c3"/><rect x="111.1" y="756.5" width="1.7" height="4" fill="#7a7a7a"/><rect x="112.8" y="756.5" width="1.9" height="4" fill="#d2d2d2"/><rect x="31" y="762.5" width="56" height="4" fill="#9bbce6"/><rect x="89.2" y="762.5" width="1.7" height="4" fill="#d2d2d2"/><rect x="95" y="762.5" width="8" height="4" fill="#c9bca9"/><rect x="102.9" y="762.5" width="1.9" height="4" fill="#d2d2d2"/><rect x="31" y="768.5" width="37.9" height="4" fill="#9bbce6"/><rect x="71.1" y="768.5" width="1.7" height="4" fill="#d2d2d2"/><rect x="74.9" y="768.5" width="8" height="4" fill="#c9bca9"/><rect x="85.1" y="768.5" width="1.7" height="4" fill="#d2d2d2"/><rect x="23" y="774.5" width="1.9" height="4" fill="#7a7a7a"/><rect x="23" y="786.5" width="15.7" height="4" fill="#d9d9d9"/><rect x="38.7" y="786.5" width="14.3" height="4" fill="#9cdc9c"/><rect x="23" y="792.5" width="1.9" height="4" fill="#7a7a7a"/><rect x="31" y="798.5" width="15.7" height="4" fill="#9bbce6"/><rect x="49.1" y="798.5" width="1.7" height="4" fill="#d2d2d2"/><rect x="52.9" y="798.5" width="3.9" height="4" fill="#eea897"/><rect x="59.2" y="798.5" width="1.7" height="4" fill="#d2d2d2"/><rect x="31" y="804.5" width="15.7" height="4" fill="#9bbce6"/><rect x="49.1" y="804.5" width="1.7" height="4" fill="#d2d2d2"/><rect x="52.9" y="804.5" width="12.1" height="4" fill="#c9bca9"/><rect x="65" y="804.5" width="1.9" height="4" fill="#d2d2d2"/><rect x="31" y="810.5" width="13.8" height="4" fill="#9bbce6"/><rect x="47.1" y="810.5" width="1.7" height="4" fill="#d2d2d2"/><rect x="51" y="810.5" width="7.7" height="4" fill="#9fc4cf"/><rect x="61.1" y="810.5" width="1.7" height="4" fill="#7a7a7a"/><rect x="62.8" y="810.5" width="15.9" height="4" fill="#f0a6c3"/><rect x="83.1" y="810.5" width="1.7" height="4" fill="#d2d2d2"/><rect x="87" y="810.5" width="14" height="4" fill="#f0a6c3"/><rect x="101" y="810.5" width="1.9" height="4" fill="#7a7a7a"/><rect x="102.9" y="810.5" width="1.9" height="4" fill="#d2d2d2"/><rect x="31" y="816.5" width="12.1" height="4" fill="#9bbce6"/><rect x="43" y="816.5" width="1.7" height="4" fill="#d2d2d2"/><rect x="49.1" y="816.5" width="15.9" height="4" fill="#f0a6c3"/><rect x="65" y="816.5" width="1.9" height="4" fill="#d2d2d2"/><rect x="31" y="822.5" width="17.9" height="4" fill="#9bbce6"/><rect x="51" y="822.5" width="1.7" height="4" fill="#d2d2d2"/><rect x="55.1" y="822.5" width="17.6" height="4" fill="#c9bca9"/><rect x="74.9" y="822.5" width="1.9" height="4" fill="#d2d2d2"/><rect x="31" y="828.5" width="37.9" height="4" fill="#9bbce6"/><rect x="71.1" y="828.5" width="1.7" height="4" fill="#d2d2d2"/><rect x="74.9" y="828.5" width="6" height="4" fill="#9fc4cf"/><rect x="83.1" y="828.5" width="1.7" height="4" fill="#7a7a7a"/><rect x="84.8" y="828.5" width="50.2" height="4" fill="#eea897"/><rect x="135.1" y="828.5" width="1.9" height="4" fill="#7a7a7a"/><rect x="137" y="828.5" width="1.9" height="4" fill="#d2d2d2"/><rect x="31" y="834.5" width="36" height="4" fill="#9bbce6"/><rect x="66.9" y="834.5" width="1.9" height="4" fill="#d2d2d2"/><rect x="73" y="834.5" width="15.9" height="4" fill="#f0a6c3"/><rect x="88.9" y="834.5" width="1.9" height="4" fill="#d2d2d2"/><rect x="31" y="840.5" width="39.9" height="4" fill="#9bbce6"/><rect x="73" y="840.5" width="1.7" height="4" fill="#d2d2d2"/><rect x="77.1" y="840.5" width="19.8" height="4" fill="#c9bca9"/><rect x="99.1" y="840.5" width="1.7" height="4" fill="#d2d2d2"/><rect x="31" y="846.5" width="44" height="4" fill="#9bbce6"/><rect x="77.1" y="846.5" width="1.7" height="4" fill="#d2d2d2"/><rect x="83.1" y="846.5" width="5.8" height="4" fill="#f0a6c3"/><rect x="91.1" y="846.5" width="5.8" height="4" fill="#f0a6c3"/><rect x="99.1" y="846.5" width="1.7" height="4" fill="#d2d2d2"/><rect x="31" y="852.5" width="17.9" height="4" fill="#9bbce6"/><rect x="51" y="852.5" width="1.7" height="4" fill="#d2d2d2"/><rect x="55.1" y="852.5" width="17.6" height="4" fill="#c9bca9"/><rect x="74.9" y="852.5" width="1.9" height="4" fill="#d2d2d2"/><rect x="31" y="858.5" width="25.8" height="4" fill="#9bbce6"/><rect x="59.2" y="858.5" width="1.7" height="4" fill="#d2d2d2"/><rect x="63.1" y="858.5" width="10.6" height="4" fill="#c9bca9"/><rect x="74.9" y="858.5" width="1.9" height="4" fill="#d2d2d2"/><rect x="31" y="888.5" width="23.9" height="4" fill="#9bbce6"/><rect x="54.9" y="888.5" width="1.9" height="4" fill="#d2d2d2"/><rect x="61.1" y="888.5" width="7.7" height="4" fill="#c9bca9"/><rect x="71.1" y="888.5" width="1.7" height="4" fill="#d2d2d2"/><rect x="31" y="894.5" width="15.7" height="4" fill="#9bbce6"/><rect x="49.1" y="894.5" width="1.7" height="4" fill="#d2d2d2"/><rect x="52.9" y="894.5" width="8" height="4" fill="#f0a6c3"/><rect x="65" y="894.5" width="1.7" height="4" fill="#f0a6c3"/><rect x="71.1" y="894.5" width="7.7" height="4" fill="#f0a6c3"/><rect x="83.1" y="894.5" width="11.8" height="4" fill="#f0a6c3"/><rect x="97.1" y="894.5" width="23.7" height="4" fill="#9bbce6"/><rect x="120.8" y="894.5" width="1.9" height="4" fill="#d2d2d2"/><rect x="31" y="900.5" width="37.9" height="4" fill="#9bbce6"/><rect x="71.1" y="900.5" width="1.7" height="4" fill="#d2d2d2"/><rect x="74.9" y="900.5" width="6" height="4" fill="#9fc4cf"/><rect x="83.1" y="900.5" width="1.7" height="4" fill="#7a7a7a"/><rect x="84.8" y="900.5" width="38.4" height="4" fill="#eea897"/><rect x="123.2" y="900.5" width="1.9" height="4" fill="#7a7a7a"/><rect x="125.2" y="900.5" width="1.9" height="4" fill="#d2d2d2"/><rect x="31" y="906.5" width="36" height="4" fill="#9bbce6"/><rect x="66.9" y="906.5" width="1.9" height="4" fill="#d2d2d2"/><rect x="73" y="906.5" width="12.1" height="4" fill="#f0a6c3"/><rect x="85.1" y="906.5" width="1.9" height="4" fill="#d2d2d2"/><rect x="31" y="912.5" width="39.9" height="4" fill="#9bbce6"/><rect x="73" y="912.5" width="1.7" height="4" fill="#d2d2d2"/><rect x="77.1" y="912.5" width="19.8" height="4" fill="#c9bca9"/><rect x="99.1" y="912.5" width="1.7" height="4" fill="#d2d2d2"/><rect x="31" y="918.5" width="44" height="4" fill="#9bbce6"/><rect x="77.1" y="918.5" width="1.7" height="4" fill="#d2d2d2"/><rect x="83.1" y="918.5" width="3.9" height="4" fill="#f0a6c3"/><rect x="89.2" y="918.5" width="5.8" height="4" fill="#f0a6c3"/><rect x="97.1" y="918.5" width="1.7" height="4" fill="#d2d2d2"/><rect x="31" y="924.5" width="17.9" height="4" fill="#9bbce6"/><rect x="51" y="924.5" width="1.7" height="4" fill="#d2d2d2"/><rect x="55.1" y="924.5" width="17.6" height="4" fill="#c9bca9"/><rect x="74.9" y="924.5" width="1.9" height="4" fill="#d2d2d2"/></svg><div style="left:1645.2px;top:264px;width:187px;height:156px;background:rgba(0,0,0,.10);"></div><div style="left:696px;top:356px;width:479.7px;height:107.5px;background:#e9e9e9;border-radius:11px;box-shadow:0 0 0 1px rgba(0,0,0,.12),0 8px 22px rgba(0,0,0,.16),0 1px 4px rgba(0,0,0,.08);"></div><div style="left:706.3px;top:366.3px;width:460px;height:43.3px;background:#0063e1;border-radius:10px;"></div><svg style="left:724.5px;top:373.3px;" width="31" height="31" viewBox="0 0 31 31"><rect x="1.8" y="1.8" width="27.4" height="27.4" rx="4.5" fill="#1cb98b" stroke="#12936c" stroke-width="1.6"/><rect x=".8" y=".8" width="29.4" height="29.4" rx="5.5" fill="none" stroke="#9cc4ff" stroke-width="1.6" opacity=".8"/></svg><div class="t s" style="left:732.8px;top:376.6px;font-weight:700;font-size:22px;line-height:25px;color:#fff;">P</div><svg style="left:724.5px;top:417px;" width="31" height="31" viewBox="0 0 31 31"><rect x="1.8" y="1.8" width="27.4" height="27.4" rx="4.5" fill="#1cb98b" stroke="#12936c" stroke-width="1.6"/></svg><div class="t s" style="left:732.8px;top:420.3px;font-weight:700;font-size:22px;line-height:25px;color:#fff;">P</div><div class="t m" style="left:771.1px;top:374.3px;font-size:24px;line-height:28px;color:#333;"><span style="color:#fff;font-weight:700;">pad</span><span style="color:rgba(255,255,255,.72);">ding</span><span style="color:#fff;font-weight:700;"><span class="hy">-</span>to</span><span style="color:rgba(255,255,255,.72);">p:</span></div><div class="t m" style="left:771.1px;top:418px;font-size:24px;line-height:28px;color:#333;"><span style="color:#333;">scroll<span class="hy">-</span></span><span style="color:#000;font-weight:700;">pad</span><span style="color:#333;">ding</span><span style="color:#000;font-weight:700;"><span class="hy">-</span>to</span><span style="color:#333;">p:</span></div><div style="left:960px;top:374.5px;width:43.8px;height:27.5px;background:rgba(255,255,255,.27);border-radius:14px;"></div><div style="left:967.5px;top:384.6px;width:7.2px;height:7.2px;background:#2f6fd0;border-radius:50%;"></div><div style="left:978.4px;top:384.6px;width:7.2px;height:7.2px;background:#2f6fd0;border-radius:50%;"></div><div style="left:989.3px;top:384.6px;width:7.2px;height:7.2px;background:#2f6fd0;border-radius:50%;"></div><div style="left:1060px;top:418.3px;width:43.8px;height:27.5px;background:#d6d6d6;border-radius:14px;"></div><div style="left:1067.5px;top:428.40000000000003px;width:7.2px;height:7.2px;background:#a6a6a6;border-radius:50%;"></div><div style="left:1078.4px;top:428.40000000000003px;width:7.2px;height:7.2px;background:#a6a6a6;border-radius:50%;"></div><div style="left:1089.3px;top:428.40000000000003px;width:7.2px;height:7.2px;background:#a6a6a6;border-radius:50%;"></div><div style="left:1410px;top:1094px;width:411.5px;height:40px;box-sizing:border-box;background:#fff;border:2px solid #d4d4d4;border-radius:8px;"></div><div class="t s" style="left:1425px;top:1101.3px;font-size:23px;line-height:26px;color:#8a8a8a;letter-spacing:0.199px;">Ln 7, Col 11</div><div class="t s" style="left:1582.5px;top:1102.3px;font-size:22.2px;line-height:25px;color:#222;letter-spacing:-1.322px;">CSS</div><svg style="left:1630.5px;top:1103px;" width="16" height="22" viewBox="0 0 16 22"><path d="M2 8.2L8 2.2L14 8.2M2 13.8L8 19.8L14 13.8" fill="none" stroke="#98a2ad" stroke-width="2.2" stroke-linecap="round" stroke-linejoin="round"/></svg><div class="t s" style="left:1683px;top:1101.3px;font-size:23px;line-height:26px;color:#222;letter-spacing:-0.055px;">4 Spaces</div><svg style="left:1786px;top:1108px;" width="17" height="12" viewBox="0 0 17 12"><path d="M2 2.2L8.5 9L15 2.2" fill="none" stroke="#98a2ad" stroke-width="2.3" stroke-linecap="round" stroke-linejoin="round"/></svg><div style="left:1834px;top:152px;width:478px;height:1024px;background:#f6f6f6;"></div><div style="left:1832px;top:152px;width:2px;height:1024px;background:#c8c8c8;"></div><div style="left:1834px;top:206px;width:478px;height:2px;background:#cdcdcd;"></div><svg style="left:1995px;top:167px;" width="28" height="26" viewBox="0 0 28 26"><path d="M2.2 2.5H17.8M6.4 7.6H21.8M10.4 12.9H25.8M2.2 17.6H17.8M6.4 22.7H21.8" stroke="#505050" stroke-width="2" fill="none"/></svg><svg style="left:2058px;top:163px;" width="32" height="32" viewBox="0 0 32 32"><path d="M15 3.8L28.1 17L15 30.2L1.9 17Z" fill="#0a63f5"/><path d="M15 26.5V12.5M9.8 17.2L15 12L20.2 17.2M8 23.3L15 19.2L22 23.3" fill="none" stroke="#f6f6f6" stroke-width="2.3" stroke-linecap="round" stroke-linejoin="round"/><circle cx="26.9" cy="5.1" r="4.9" fill="#a049c8"/></svg><svg style="left:2122px;top:167px;" width="30" height="25" viewBox="0 0 30 25"><rect x="1.5" y="2" width="27" height="21" rx="4.5" fill="none" stroke="#4a4a4a" stroke-width="2.2"/><path d="M6.8 8.6H11.8" stroke="#4a4a4a" stroke-width="2.2" stroke-linecap="round"/></svg><svg style="left:1852px;top:222px;" width="28" height="24" viewBox="0 0 28 24"><path d="M1.6 22.7V2H10.5L12.8 5H26.4V22.7Z" fill="none" stroke="#444" stroke-width="2"/><path d="M1.6 8.2H26.4" stroke="#444" stroke-width="1.7"/><path d="M14 11.3L18.4 15.6L14 19.9L9.6 15.6Z" fill="#444"/></svg><div class="t s" style="left:1890.5px;top:222px;font-size:22.5px;line-height:25px;color:#3a3a3a;letter-spacing:0.545px;">play.date</div><svg style="left:2276px;top:223px;" width="16" height="22" viewBox="0 0 16 22"><path d="M2 7.8L8 2L14 7.8M2 14.2L8 20L14 14.2" fill="none" stroke="#98a2ad" stroke-width="2.2" stroke-linecap="round" stroke-linejoin="round"/></svg><div style="left:1844px;top:259.5px;width:458px;height:2px;background:#cdcdcd;"></div><svg style="left:1856px;top:275px;" width="20" height="26" viewBox="0 0 20 26"><circle cx="4.5" cy="4.3" r="2.9" fill="#444"/><circle cx="15.2" cy="4.3" r="2.9" fill="#444"/><circle cx="4.5" cy="21.5" r="2.9" fill="#444"/><path d="M4.5 4.3V21.5M15.2 4.3V8Q15.2 12.4 10.5 12.4H4.5" fill="none" stroke="#444" stroke-width="1.6"/></svg><div class="t s" style="left:1890.5px;top:275.6px;font-size:22.5px;line-height:25px;color:#3a3a3a;letter-spacing:0.407px;">main</div><svg style="left:2276px;top:277px;" width="16" height="22" viewBox="0 0 16 22"><path d="M2 7.8L8 2L14 7.8M2 14.2L8 20L14 14.2" fill="none" stroke="#98a2ad" stroke-width="2.2" stroke-linecap="round" stroke-linejoin="round"/></svg><div style="left:1844px;top:313.6px;width:458px;height:2px;background:#cdcdcd;"></div><svg style="left:1859px;top:331px;" width="26" height="26" viewBox="0 0 26 26"><circle cx="3.6" cy="3.8" r="3.1" fill="#444"/><circle cx="3.6" cy="22.2" r="3.1" fill="#444"/><circle cx="12.799999999999999" cy="3.8" r="3.1" fill="#444"/><circle cx="12.799999999999999" cy="22.2" r="3.1" fill="#444"/><circle cx="22" cy="3.8" r="3.1" fill="#444"/><circle cx="22" cy="22.2" r="3.1" fill="#444"/><path d="M3.6 3.8V22.2M12.8 3.8V8Q12.8 12.2 8.2 12.6Q3.6 13 3.6 17M22 3.8V8Q22 12.2 17.4 12.6Q12.8 13 12.8 17V22.2M22 12V22.2" fill="none" stroke="#444" stroke-width="1.4"/></svg><svg style="left:1912px;top:326px;" width="34" height="34" viewBox="0 0 34 34"><rect x="1.9" y="3.9" width="27" height="28.1" rx="2.5" fill="#0a63f5"/><path d="M15.4 6.3V23M7 14.6H23.8M7 27.2H23.8" stroke="#fff" stroke-width="3.3" fill="none"/><circle cx="28" cy="6" r="5" fill="#a049c8"/></svg><svg style="left:1971px;top:327px;" width="26" height="33" viewBox="0 0 26 33"><circle cx="13" cy="17" r="10.2" fill="none" stroke="#444" stroke-width="2.1"/><path d="M13 17.5L16 11.8" stroke="#444" stroke-width="2.1" stroke-linecap="round"/><path d="M10 2.2H16M10 31.2H16" stroke="#777" stroke-width="2"/><path d="M10.5 4H15.5V6.5H10.5ZM10.5 27.8H15.5V30H10.5Z" fill="#bbb"/></svg><svg style="left:2159px;top:329px;" width="30" height="30" viewBox="0 0 30 30"><path d="M3 27V6.5L8.6 12.1L19.6 2L28 10.4L16.9 20.4L23.5 27Z" fill="none" stroke="#444" stroke-width="2" stroke-linejoin="round"/></svg><svg style="left:2210px;top:329px;" width="30" height="30" viewBox="0 0 30 30"><path d="M2 28V5L9 12L21.8 1.5L28.5 8.2L17 20L25 28Z" fill="#4a4a4a"/></svg><svg style="left:2262px;top:329px;" width="30" height="30" viewBox="0 0 30 30"><path d="M28.5 2V25L21.5 18L7.7 29.5L1.5 23.3L14 10L5.5 2Z" fill="#4a4a4a"/></svg><div style="left:1834px;top:372.5px;width:478px;height:2px;background:#cdcdcd;"></div><div style="left:1844px;top:385px;width:458px;height:112.5px;box-sizing:border-box;border:2px solid #c9c9c9;background:#fff;"></div><div class="t s" style="left:1856.5px;top:388.3px;font-size:22.5px;line-height:25px;color:#c4c4c4;letter-spacing:0.56px;">Message (press <span class="dj">⌘↩</span> to commit)</div><div style="left:1854px;top:516px;width:24px;height:24px;background:#dcdcdc;border-radius:5.5px;"></div><div class="t s" style="left:1887.5px;top:516px;font-size:22.5px;line-height:25px;color:#3a3a3a;letter-spacing:-0.195px;">Amend</div><div class="t s" style="left:2092px;top:516px;font-size:22.5px;line-height:25px;color:#b4b4b4;letter-spacing:-0.428px;">0/50</div><svg style="left:2146px;top:512px;" width="32" height="32" viewBox="0 0 32 32"><rect width="32" height="32" rx="4" fill="#6fcfb4"/><path d="M7.5 13C7.5 5.5 11 2.5 16 2.5S24.5 5.5 24.5 13L23.5 9.5L21.5 7.5L19 8.5L16 6.5L13 8.5L10.5 7.5L8.5 9.5Z" fill="#e8251f"/><path d="M8.2 12C8.2 8 11 6.5 16 6.5S23.8 8 23.8 12V18.5C23.8 25 20 29.3 16 29.3S8.2 25 8.2 18.5Z" fill="#f7c9a6" stroke="#5a2a1a" stroke-width=".8"/><ellipse cx="7.6" cy="16" rx="1.5" ry="2.4" fill="#f7c9a6" stroke="#5a2a1a" stroke-width=".7"/><ellipse cx="24.4" cy="16" rx="1.5" ry="2.4" fill="#f7c9a6" stroke="#5a2a1a" stroke-width=".7"/><circle cx="12.6" cy="15" r="1" fill="#222"/><circle cx="19.4" cy="15" r="1" fill="#222"/><circle cx="10.9" cy="19.6" r="2.1" fill="#ee2a2a"/><circle cx="21.1" cy="19.6" r="2.1" fill="#ee2a2a"/><circle cx="16" cy="18.3" r="1.1" fill="#e9a886"/><path d="M12.2 20.6Q16 23.8 19.8 20.6" stroke="#5a2a1a" stroke-width=".9" fill="none"/><circle cx="12.6" cy="15" r="1.9" fill="#fff" opacity=".7"/><circle cx="19.4" cy="15" r="1.9" fill="#fff" opacity=".7"/><circle cx="12.6" cy="15.2" r="1" fill="#222"/><circle cx="19.4" cy="15.2" r="1" fill="#222"/></svg><div style="left:2189px;top:509px;width:113px;height:38px;box-sizing:border-box;border:1.5px solid #e2e2e2;border-radius:9px;background:#f7f7f7;"></div><div class="t s" style="left:2203.5px;top:516px;font-weight:700;font-size:22.5px;line-height:25px;color:#b6b6b6;letter-spacing:-0.249px;">Commit</div><div style="left:2053px;top:552px;width:40px;height:1.8px;background:#cfcfcf;"></div><div style="left:1834px;top:557.7px;width:478px;height:2px;background:#cdcdcd;"></div><div class="t s" style="left:1855px;top:573px;font-size:22.5px;line-height:25px;color:#3a3a3a;letter-spacing:-0.011px;">Changes</div><div class="t s" style="left:2099.5px;top:573px;font-size:22.5px;line-height:25px;color:#555;">2</div><svg style="left:2132px;top:575px;" width="24" height="22" viewBox="0 0 24 22"><g stroke="#5a5a5a" stroke-width="1.4" fill="#f6f6f6"><path d="M1 4H23M1 11H23M1 18H23"/><circle cx="15.5" cy="4" r="2.1"/><circle cx="8" cy="11" r="2.1"/><circle cx="15.5" cy="18" r="2.1"/></g></svg><div style="left:2176.5px;top:567px;width:125.5px;height:38px;box-sizing:border-box;border:1.5px solid #b2b2b2;border-radius:8px;background:linear-gradient(#fff,#f3f3f3);box-shadow:0 1.5px 1.5px rgba(0,0,0,.16);"></div><div class="t s" style="left:2191px;top:573.3px;font-weight:700;font-size:22.5px;line-height:25px;color:#111;letter-spacing:0.069px;">Stage All</div><div style="left:1844px;top:611.5px;width:458px;height:2px;background:#cdcdcd;"></div><svg style="left:1860.5px;top:650px;" width="19" height="13" viewBox="0 0 19 13"><path d="M2 2.2L9.5 10L17 2.2" fill="none" stroke="#6c6c6c" stroke-width="2.7" stroke-linecap="round" stroke-linejoin="round"/></svg><div style="left:1888.2px;top:644px;width:23.5px;height:23.5px;background:#dcdcdc;border-radius:5.5px;"></div><svg style="left:1923px;top:641px;" width="30" height="30" viewBox="0 0 30 30"><path d="M0 4.5A4.5 4.5 0 0 1 4.5 0H11.5C13.6 0 14.4 .9 15.1 2.9H25.7A4.3 4.3 0 0 1 30 7.2V20H0Z" fill="#0a86cf"/><path d="M0 4.5A4.5 4.5 0 0 1 4.5 0H11.5C13.6 0 14.4 .9 15.1 2.9H25.7A4.3 4.3 0 0 1 30 7.2V9H0Z" fill="#0b7cc2"/><rect x="0" y="5.8" width="30" height="24.2" rx="4.6" fill="#23a2dc"/><rect x="0" y="5.8" width="30" height="23.2" rx="4.6" fill="#3ecafd"/></svg><div class="t s" style="left:1964.8px;top:643px;font-size:22.5px;line-height:25px;color:#3a3a3a;letter-spacing:0.296px;">source</div><div style="left:2250.3px;top:642.3px;width:27.5px;height:27.5px;box-sizing:border-box;border:2.2px solid #1d98c8;border-radius:6px;"></div><div class="t s" style="left:2255.8px;top:644.1px;font-weight:700;font-size:23px;line-height:26px;color:#1d98c8;">M</div><div style="left:1922px;top:688px;width:23.5px;height:23.5px;background:#dcdcdc;border-radius:5.5px;"></div><svg style="left:1957px;top:685px;" width="30" height="30" viewBox="0 0 30 30"><defs><linearGradient id="g23" x1="0" y1="0" x2="0" y2="1"><stop offset="0" stop-color="#0de00d"/><stop offset=".5" stop-color="#04d804"/><stop offset="1" stop-color="#029a0a"/></linearGradient></defs><circle cx="15" cy="15" r="15" fill="url(#g23)"/><ellipse cx="15" cy="15" rx="6.3" ry="14.2" fill="none" stroke="#74f5bf" stroke-width="1.2"/><path d="M1.4 10.2H28.6M1.4 20H28.6" stroke="#8cf7b6" stroke-width="2.2" fill="none"/></svg><div class="t s" style="left:1999px;top:686.8px;font-size:22.5px;line-height:25px;color:#3a3a3a;letter-spacing:0.438px;">index.html</div><div style="left:2250.3px;top:686.2px;width:27.5px;height:27.5px;box-sizing:border-box;border:2.2px solid #1d98c8;border-radius:6px;"></div><div class="t s" style="left:2255.8px;top:688px;font-weight:700;font-size:23px;line-height:26px;color:#1d98c8;">M</div><div style="left:1922px;top:732.3px;width:23.5px;height:23.5px;background:#dcdcdc;border-radius:5.5px;"></div><svg style="left:1956px;top:730px;" width="32" height="28" viewBox="0 0 32 28"><path d="M13.6 1.6Q16 -1.6 18.4 1.6L31.2 23.6Q32.8 27 29.4 27.4H2.6Q-.8 27 .8 23.6Z" fill="#c8102e" opacity="0"/><clipPath id="csc"><path d="M13.9 1.9Q16 -1.3 18.1 1.9L31.3 24.2Q32.6 27.6 29.2 27.8H2.8Q-.6 27.6 .7 24.2Z"/></clipPath><g clip-path="url(#csc)"><rect x="-2" y="-2" width="36" height="32" fill="#fdeedd"/><path d="M16 -3L24.2 13.3H7.8Z" fill="#ffa50b"/><path d="M7.8 13.3L16 29H-3L-3 29Z" fill="#16b98b"/><path d="M24.2 13.3L35 29H16Z" fill="#f6093f"/><path d="M-2 26.4H34V30H-2Z" fill="#000" opacity=".28"/></g></svg><div class="t s" style="left:1999px;top:731.7px;font-size:22.5px;line-height:25px;color:#3a3a3a;letter-spacing:0.311px;">playdate.css</div><div style="left:2250.3px;top:730.1px;width:27.5px;height:27.5px;box-sizing:border-box;border:2.2px solid #1d98c8;border-radius:6px;"></div><div class="t s" style="left:2255.8px;top:731.9px;font-weight:700;font-size:23px;line-height:26px;color:#1d98c8;">M</div><div style="left:1834px;top:774px;width:478px;height:2px;background:#cdcdcd;"></div><svg style="left:2058px;top:784px;" width="36" height="34" viewBox="0 0 36 34"><path d="M13.5 10Q15 7.6 16.5 10L27.6 29.3Q28.4 31.4 26.2 31.4H3.8Q1.6 31.4 2.4 29.3Z" fill="#0a63f5"/><rect x="13.4" y="15" width="3.2" height="8.6" rx="1.6" fill="#f6f6f6"/><circle cx="15" cy="27" r="1.9" fill="#f6f6f6"/><circle cx="27" cy="8" r="5" fill="#a049c8"/></svg><div style="left:1834px;top:829.5px;width:478px;height:2px;background:#cdcdcd;"></div><svg style="left:1860.5px;top:868px;" width="19" height="13" viewBox="0 0 19 13"><path d="M2 2.2L9.5 10L17 2.2" fill="none" stroke="#6c6c6c" stroke-width="2.7" stroke-linecap="round" stroke-linejoin="round"/></svg><svg style="left:1888px;top:860px;" width="32" height="28" viewBox="0 0 32 28"><path d="M13.6 1.6Q16 -1.6 18.4 1.6L31.2 23.6Q32.8 27 29.4 27.4H2.6Q-.8 27 .8 23.6Z" fill="#c8102e" opacity="0"/><clipPath id="csc"><path d="M13.9 1.9Q16 -1.3 18.1 1.9L31.3 24.2Q32.6 27.6 29.2 27.8H2.8Q-.6 27.6 .7 24.2Z"/></clipPath><g clip-path="url(#csc)"><rect x="-2" y="-2" width="36" height="32" fill="#fdeedd"/><path d="M16 -3L24.2 13.3H7.8Z" fill="#ffa50b"/><path d="M7.8 13.3L16 29H-3L-3 29Z" fill="#16b98b"/><path d="M24.2 13.3L35 29H16Z" fill="#f6093f"/><path d="M-2 26.4H34V30H-2Z" fill="#000" opacity=".28"/></g></svg><div class="t s" style="left:1931px;top:861.8px;font-weight:700;font-size:22.5px;line-height:25px;color:#222;letter-spacing:0.448px;">playdate.css</div><div class="t s" style="left:2089px;top:861.8px;font-size:22.5px;line-height:25px;color:#6e6e6e;letter-spacing:0.21px;">3 issues</div><svg style="left:1923px;top:908px;" width="25" height="24" viewBox="0 0 25 24"><defs><linearGradient id="g24" x1="0" y1="0" x2="0" y2="1"><stop offset="0" stop-color="#ffb21f"/><stop offset="1" stop-color="#f2780c"/></linearGradient></defs><path d="M.5 22.5H24.5V24H.5Z" fill="#e0c0a0" opacity=".7"/><path d="M11.2 1.3Q12.5 -.7 13.8 1.3L24.3 20.5Q25 22.6 22.8 22.6H2.2Q0 22.6 .7 20.5Z" fill="url(#g24)"/><rect x="10.9" y="6.8" width="3.2" height="8.4" rx="1.6" fill="#fff"/><circle cx="12.5" cy="18.5" r="1.9" fill="#fff"/></svg><div class="t s" style="left:1962px;top:908.2px;font-size:22.5px;line-height:25px;color:#3a3a3a;letter-spacing:0.566px;">Imported style sheets are not</div><div class="t s" style="left:1962px;top:936.2px;font-size:22.5px;line-height:25px;color:#3a3a3a;letter-spacing:0.628px;">checked in direct input and</div><div class="t s" style="left:1962px;top:964.2px;font-size:22.5px;line-height:25px;color:#3a3a3a;letter-spacing:0.54px;">file upload modes</div><svg style="left:1925px;top:1011px;" width="22.3" height="23.3" viewBox="0 0 22 23"><defs><linearGradient id="g25" x1="0" y1="0" x2="0" y2="1"><stop offset="0" stop-color="#ff5a6a"/><stop offset="1" stop-color="#ee1f3c"/></linearGradient></defs><path d="M6.4 .3H15.6L21.7 6.4V15.6L15.6 21.7H6.4L.3 15.6V6.4Z" fill="#c9bcbc" opacity=".5" transform="translate(0 1)"/><path d="M6.4 .3H15.6L21.7 6.4V15.6L15.6 21.7H6.4L.3 15.6V6.4Z" fill="url(#g25)"/><rect x="9.3" y="4.2" width="3.4" height="9" rx="1.7" fill="#fff"/><circle cx="11" cy="16.6" r="2" fill="#fff"/></svg><div class="t s" style="left:1962px;top:1010.2px;font-size:22.5px;line-height:25px;color:#3a3a3a;letter-spacing:0.798px;">Property “mrgan” doesn't</div><div class="t s" style="left:1962px;top:1038.2px;font-size:22.5px;line-height:25px;color:#3a3a3a;letter-spacing:0.559px;">exist. The closest matching</div><div class="t s" style="left:1962px;top:1066.2px;font-size:22.5px;line-height:25px;color:#3a3a3a;letter-spacing:0.612px;">property name is “margin” : 0</div><svg style="left:1923px;top:1112px;" width="25" height="24" viewBox="0 0 25 24"><defs><linearGradient id="g26" x1="0" y1="0" x2="0" y2="1"><stop offset="0" stop-color="#ffb21f"/><stop offset="1" stop-color="#f2780c"/></linearGradient></defs><path d="M.5 22.5H24.5V24H.5Z" fill="#e0c0a0" opacity=".7"/><path d="M11.2 1.3Q12.5 -.7 13.8 1.3L24.3 20.5Q25 22.6 22.8 22.6H2.2Q0 22.6 .7 20.5Z" fill="url(#g26)"/><rect x="10.9" y="6.8" width="3.2" height="8.4" rx="1.6" fill="#fff"/><circle cx="12.5" cy="18.5" r="1.9" fill="#fff"/></svg><div class="t s" style="left:1962px;top:1111.9px;font-size:22.5px;line-height:25px;color:#3a3a3a;letter-spacing:1.088px;">“-webkit-text-size-adjust” is</div><div class="t s" style="left:1962px;top:1139.9px;font-size:22.5px;line-height:25px;color:#3a3a3a;letter-spacing:0.404px;">a vendor extension</div></div></div><div id="ring" style="left:112px;top:76px;width:2200px;height:1100px;"></div></body></html>
